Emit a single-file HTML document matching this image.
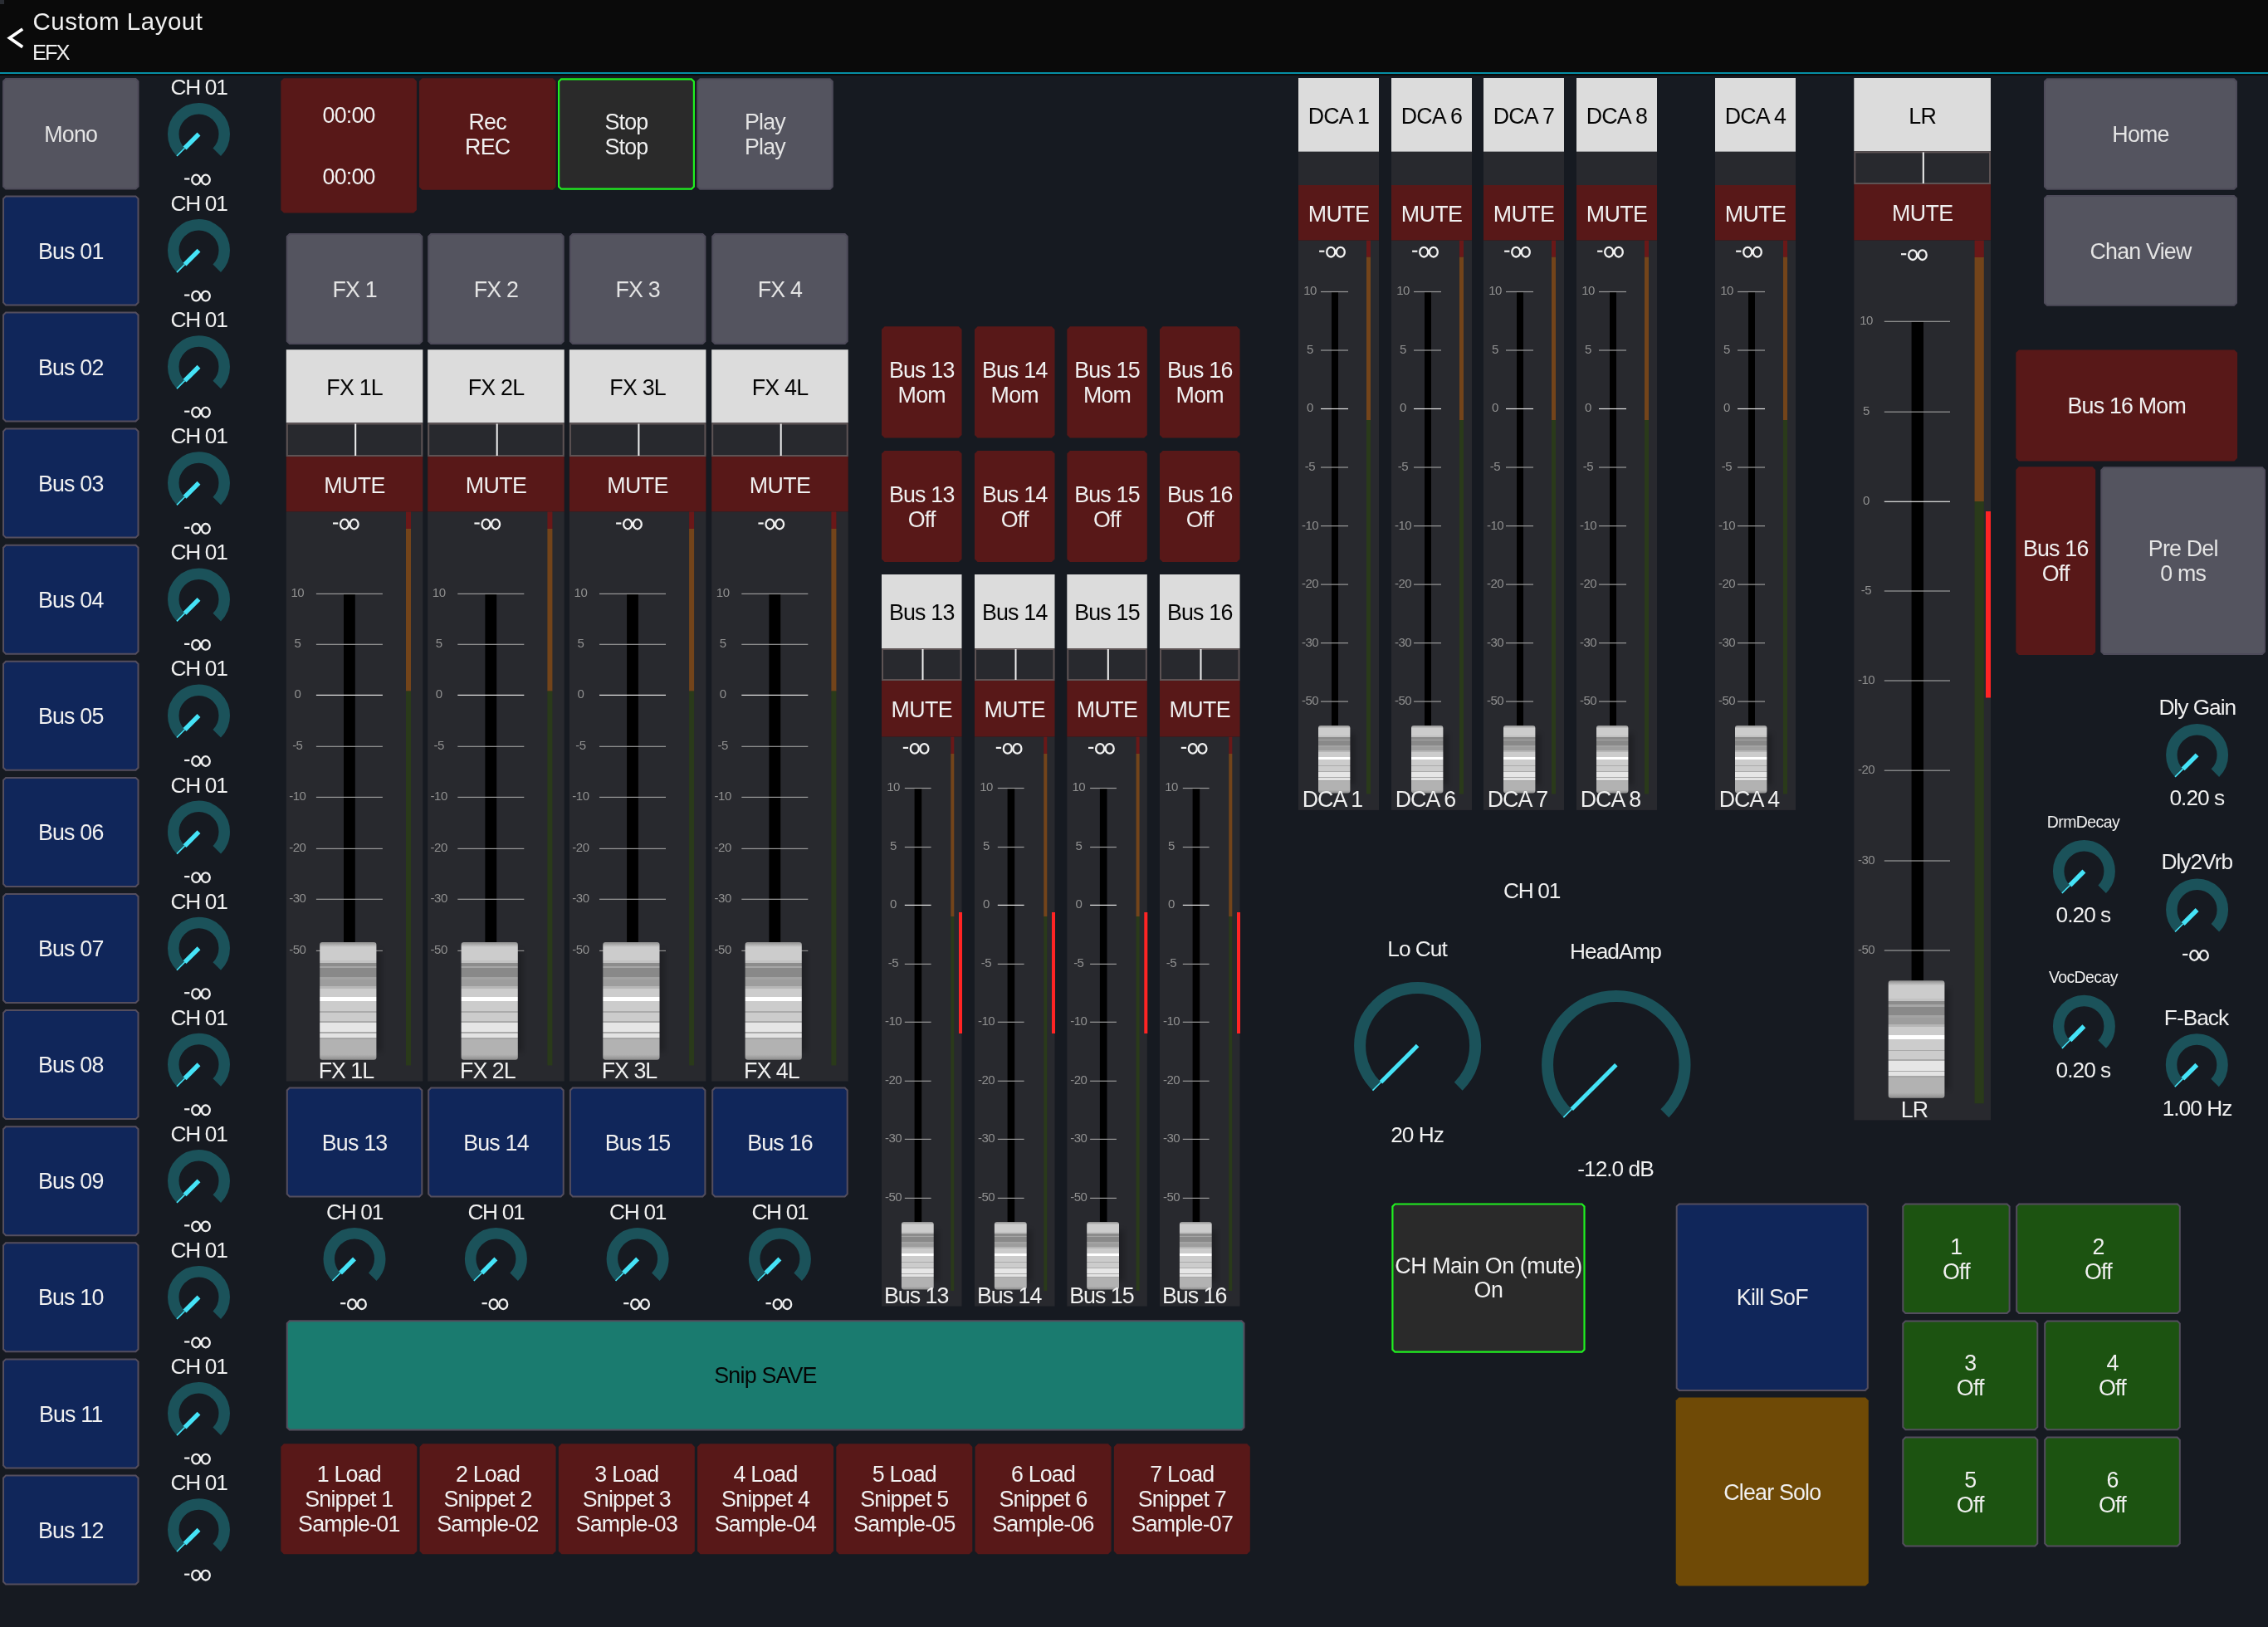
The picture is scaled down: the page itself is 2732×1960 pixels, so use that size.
<!DOCTYPE html><html><head><meta charset="utf-8"><title>Custom Layout</title><style>html,body{margin:0;padding:0;background:#161a21;overflow:hidden;width:2732px;height:1960px}svg text{font-family:"Liberation Sans",sans-serif} svg{will-change:transform}</style></head><body><svg width="2732" height="1960" viewBox="0 0 2732 1960" font-family='"Liberation Sans", sans-serif' style="display:block"><defs><filter id="blur" x="-50%" y="-20%" width="200%" height="140%"><feGaussianBlur stdDeviation="3"/></filter><linearGradient id="fcap" x1="0" y1="0" x2="0" y2="1"><stop offset="0.0" stop-color="#8e8e8e"/><stop offset="0.0173" stop-color="#a8a8a8"/><stop offset="0.0415" stop-color="#cccccc"/><stop offset="0.152" stop-color="#cccccc"/><stop offset="0.152" stop-color="#c2c2c2"/><stop offset="0.173" stop-color="#c2c2c2"/><stop offset="0.173" stop-color="#8c8c8c"/><stop offset="0.204" stop-color="#8c8c8c"/><stop offset="0.204" stop-color="#a6a6a6"/><stop offset="0.221" stop-color="#a6a6a6"/><stop offset="0.221" stop-color="#898989"/><stop offset="0.298" stop-color="#898989"/><stop offset="0.298" stop-color="#a3a3a3"/><stop offset="0.318" stop-color="#a3a3a3"/><stop offset="0.318" stop-color="#9d9d9d"/><stop offset="0.374" stop-color="#9d9d9d"/><stop offset="0.374" stop-color="#b6b6b6"/><stop offset="0.394" stop-color="#b6b6b6"/><stop offset="0.394" stop-color="#cccccc"/><stop offset="0.464" stop-color="#cccccc"/><stop offset="0.464" stop-color="#ffffff"/><stop offset="0.502" stop-color="#ffffff"/><stop offset="0.502" stop-color="#cccccc"/><stop offset="0.588" stop-color="#cccccc"/><stop offset="0.588" stop-color="#ababab"/><stop offset="0.602" stop-color="#ababab"/><stop offset="0.602" stop-color="#cccccc"/><stop offset="0.671" stop-color="#cccccc"/><stop offset="0.671" stop-color="#ababab"/><stop offset="0.682" stop-color="#ababab"/><stop offset="0.682" stop-color="#e6e6e6"/><stop offset="0.765" stop-color="#e6e6e6"/><stop offset="0.765" stop-color="#ababab"/><stop offset="0.776" stop-color="#ababab"/><stop offset="0.776" stop-color="#e3e3e3"/><stop offset="0.81" stop-color="#e3e3e3"/><stop offset="0.81" stop-color="#a6a6a6"/><stop offset="0.824" stop-color="#a6a6a6"/><stop offset="0.824" stop-color="#b2b2b2"/><stop offset="0.955" stop-color="#b2b2b2"/><stop offset="1.0" stop-color="#8e8e8e"/></linearGradient></defs><rect x="0.0" y="0.0" width="2732.0" height="1960.0" fill="#161a21"/>
<rect x="0.0" y="0.0" width="2732.0" height="87.0" fill="#0a0a0a"/>
<rect x="0.0" y="87.0" width="2732.0" height="2.0" fill="#068ea5"/>
<rect x="0.0" y="89.0" width="2732.0" height="2.0" fill="#0a0a0a"/>
<rect x="0.0" y="0.0" width="5.0" height="5.0" fill="#2a2d33"/>
<polyline points="27.2,35 11.6,45.8 27.2,56.6" fill="none" stroke="#ffffff" stroke-width="3.8"/>
<text x="39.5" y="36.3" font-size="29.5" fill="#f0f0f0" text-anchor="start" letter-spacing="0.5">Custom Layout</text>
<text x="39.0" y="71.8" font-size="25.5" fill="#f0f0f0" text-anchor="start" letter-spacing="-2.0">EFX</text>
<path d="M7.00,95.00 H163.50 L166.50,98.00 V224.60 L163.50,227.60 H7.00 L4.00,224.60 V98.00 Z" fill="#54545f" stroke="#4e4b5a" stroke-width="2"/>
<text x="85.2" y="170.9" font-size="26.8" fill="#e4e4e4" text-anchor="middle" letter-spacing="-0.8">Mono</text>
<path d="M7.00,236.40 H163.50 L166.50,239.40 V364.40 L163.50,367.40 H7.00 L4.00,364.40 V239.40 Z" fill="#10265a" stroke="#544e5e" stroke-width="2"/>
<text x="85.2" y="311.5" font-size="26.8" fill="#f0f0f0" text-anchor="middle" letter-spacing="-0.8">Bus 01</text>
<path d="M7.00,376.50 H163.50 L166.50,379.50 V504.50 L163.50,507.50 H7.00 L4.00,504.50 V379.50 Z" fill="#10265a" stroke="#544e5e" stroke-width="2"/>
<text x="85.2" y="451.6" font-size="26.8" fill="#f0f0f0" text-anchor="middle" letter-spacing="-0.8">Bus 02</text>
<path d="M7.00,516.60 H163.50 L166.50,519.60 V644.60 L163.50,647.60 H7.00 L4.00,644.60 V519.60 Z" fill="#10265a" stroke="#544e5e" stroke-width="2"/>
<text x="85.2" y="591.7" font-size="26.8" fill="#f0f0f0" text-anchor="middle" letter-spacing="-0.8">Bus 03</text>
<path d="M7.00,656.70 H163.50 L166.50,659.70 V784.70 L163.50,787.70 H7.00 L4.00,784.70 V659.70 Z" fill="#10265a" stroke="#544e5e" stroke-width="2"/>
<text x="85.2" y="731.8" font-size="26.8" fill="#f0f0f0" text-anchor="middle" letter-spacing="-0.8">Bus 04</text>
<path d="M7.00,796.80 H163.50 L166.50,799.80 V924.80 L163.50,927.80 H7.00 L4.00,924.80 V799.80 Z" fill="#10265a" stroke="#544e5e" stroke-width="2"/>
<text x="85.2" y="871.9" font-size="26.8" fill="#f0f0f0" text-anchor="middle" letter-spacing="-0.8">Bus 05</text>
<path d="M7.00,936.90 H163.50 L166.50,939.90 V1064.90 L163.50,1067.90 H7.00 L4.00,1064.90 V939.90 Z" fill="#10265a" stroke="#544e5e" stroke-width="2"/>
<text x="85.2" y="1012.0" font-size="26.8" fill="#f0f0f0" text-anchor="middle" letter-spacing="-0.8">Bus 06</text>
<path d="M7.00,1077.00 H163.50 L166.50,1080.00 V1205.00 L163.50,1208.00 H7.00 L4.00,1205.00 V1080.00 Z" fill="#10265a" stroke="#544e5e" stroke-width="2"/>
<text x="85.2" y="1152.1" font-size="26.8" fill="#f0f0f0" text-anchor="middle" letter-spacing="-0.8">Bus 07</text>
<path d="M7.00,1217.10 H163.50 L166.50,1220.10 V1345.10 L163.50,1348.10 H7.00 L4.00,1345.10 V1220.10 Z" fill="#10265a" stroke="#544e5e" stroke-width="2"/>
<text x="85.2" y="1292.2" font-size="26.8" fill="#f0f0f0" text-anchor="middle" letter-spacing="-0.8">Bus 08</text>
<path d="M7.00,1357.20 H163.50 L166.50,1360.20 V1485.20 L163.50,1488.20 H7.00 L4.00,1485.20 V1360.20 Z" fill="#10265a" stroke="#544e5e" stroke-width="2"/>
<text x="85.2" y="1432.3" font-size="26.8" fill="#f0f0f0" text-anchor="middle" letter-spacing="-0.8">Bus 09</text>
<path d="M7.00,1497.30 H163.50 L166.50,1500.30 V1625.30 L163.50,1628.30 H7.00 L4.00,1625.30 V1500.30 Z" fill="#10265a" stroke="#544e5e" stroke-width="2"/>
<text x="85.2" y="1572.4" font-size="26.8" fill="#f0f0f0" text-anchor="middle" letter-spacing="-0.8">Bus 10</text>
<path d="M7.00,1637.40 H163.50 L166.50,1640.40 V1765.40 L163.50,1768.40 H7.00 L4.00,1765.40 V1640.40 Z" fill="#10265a" stroke="#544e5e" stroke-width="2"/>
<text x="85.2" y="1712.5" font-size="26.8" fill="#f0f0f0" text-anchor="middle" letter-spacing="-0.8">Bus 11</text>
<path d="M7.00,1777.50 H163.50 L166.50,1780.50 V1905.50 L163.50,1908.50 H7.00 L4.00,1905.50 V1780.50 Z" fill="#10265a" stroke="#544e5e" stroke-width="2"/>
<text x="85.2" y="1852.6" font-size="26.8" fill="#f0f0f0" text-anchor="middle" letter-spacing="-0.8">Bus 12</text>
<text x="239.5" y="113.9" font-size="26.3" fill="#f0f0f0" text-anchor="middle" letter-spacing="-1.3">CH 01</text>
<path d="M217.76,183.24 A30.75,30.75 0 1 1 261.24,183.24" fill="none" stroke="#1b525a" stroke-width="13.5"/>
<line x1="239.50" y1="161.50" x2="222.53" y2="178.47" stroke="#45e3f7" stroke-width="5.5"/>
<line x1="222.53" y1="178.47" x2="212.98" y2="188.02" stroke="#45e3f7" stroke-width="1.6"/>
<rect x="222.1" y="214.4" width="6.3" height="2.2" fill="#f0f0f0"/>
<ellipse cx="236.2" cy="216.5" rx="5.0" ry="5.8" fill="none" stroke="#f0f0f0" stroke-width="2.3"/>
<ellipse cx="247.8" cy="216.5" rx="5.0" ry="5.8" fill="none" stroke="#f0f0f0" stroke-width="2.3"/>
<text x="239.5" y="254.0" font-size="26.3" fill="#f0f0f0" text-anchor="middle" letter-spacing="-1.3">CH 01</text>
<path d="M217.76,323.34 A30.75,30.75 0 1 1 261.24,323.34" fill="none" stroke="#1b525a" stroke-width="13.5"/>
<line x1="239.50" y1="301.60" x2="222.53" y2="318.57" stroke="#45e3f7" stroke-width="5.5"/>
<line x1="222.53" y1="318.57" x2="212.98" y2="328.12" stroke="#45e3f7" stroke-width="1.6"/>
<rect x="222.1" y="354.5" width="6.3" height="2.2" fill="#f0f0f0"/>
<ellipse cx="236.2" cy="356.6" rx="5.0" ry="5.8" fill="none" stroke="#f0f0f0" stroke-width="2.3"/>
<ellipse cx="247.8" cy="356.6" rx="5.0" ry="5.8" fill="none" stroke="#f0f0f0" stroke-width="2.3"/>
<text x="239.5" y="394.1" font-size="26.3" fill="#f0f0f0" text-anchor="middle" letter-spacing="-1.3">CH 01</text>
<path d="M217.76,463.44 A30.75,30.75 0 1 1 261.24,463.44" fill="none" stroke="#1b525a" stroke-width="13.5"/>
<line x1="239.50" y1="441.70" x2="222.53" y2="458.67" stroke="#45e3f7" stroke-width="5.5"/>
<line x1="222.53" y1="458.67" x2="212.98" y2="468.22" stroke="#45e3f7" stroke-width="1.6"/>
<rect x="222.1" y="494.6" width="6.3" height="2.2" fill="#f0f0f0"/>
<ellipse cx="236.2" cy="496.7" rx="5.0" ry="5.8" fill="none" stroke="#f0f0f0" stroke-width="2.3"/>
<ellipse cx="247.8" cy="496.7" rx="5.0" ry="5.8" fill="none" stroke="#f0f0f0" stroke-width="2.3"/>
<text x="239.5" y="534.2" font-size="26.3" fill="#f0f0f0" text-anchor="middle" letter-spacing="-1.3">CH 01</text>
<path d="M217.76,603.54 A30.75,30.75 0 1 1 261.24,603.54" fill="none" stroke="#1b525a" stroke-width="13.5"/>
<line x1="239.50" y1="581.80" x2="222.53" y2="598.77" stroke="#45e3f7" stroke-width="5.5"/>
<line x1="222.53" y1="598.77" x2="212.98" y2="608.32" stroke="#45e3f7" stroke-width="1.6"/>
<rect x="222.1" y="634.7" width="6.3" height="2.2" fill="#f0f0f0"/>
<ellipse cx="236.2" cy="636.8" rx="5.0" ry="5.8" fill="none" stroke="#f0f0f0" stroke-width="2.3"/>
<ellipse cx="247.8" cy="636.8" rx="5.0" ry="5.8" fill="none" stroke="#f0f0f0" stroke-width="2.3"/>
<text x="239.5" y="674.3" font-size="26.3" fill="#f0f0f0" text-anchor="middle" letter-spacing="-1.3">CH 01</text>
<path d="M217.76,743.64 A30.75,30.75 0 1 1 261.24,743.64" fill="none" stroke="#1b525a" stroke-width="13.5"/>
<line x1="239.50" y1="721.90" x2="222.53" y2="738.87" stroke="#45e3f7" stroke-width="5.5"/>
<line x1="222.53" y1="738.87" x2="212.98" y2="748.42" stroke="#45e3f7" stroke-width="1.6"/>
<rect x="222.1" y="774.8" width="6.3" height="2.2" fill="#f0f0f0"/>
<ellipse cx="236.2" cy="776.9" rx="5.0" ry="5.8" fill="none" stroke="#f0f0f0" stroke-width="2.3"/>
<ellipse cx="247.8" cy="776.9" rx="5.0" ry="5.8" fill="none" stroke="#f0f0f0" stroke-width="2.3"/>
<text x="239.5" y="814.4" font-size="26.3" fill="#f0f0f0" text-anchor="middle" letter-spacing="-1.3">CH 01</text>
<path d="M217.76,883.74 A30.75,30.75 0 1 1 261.24,883.74" fill="none" stroke="#1b525a" stroke-width="13.5"/>
<line x1="239.50" y1="862.00" x2="222.53" y2="878.97" stroke="#45e3f7" stroke-width="5.5"/>
<line x1="222.53" y1="878.97" x2="212.98" y2="888.52" stroke="#45e3f7" stroke-width="1.6"/>
<rect x="222.1" y="914.9" width="6.3" height="2.2" fill="#f0f0f0"/>
<ellipse cx="236.2" cy="917.0" rx="5.0" ry="5.8" fill="none" stroke="#f0f0f0" stroke-width="2.3"/>
<ellipse cx="247.8" cy="917.0" rx="5.0" ry="5.8" fill="none" stroke="#f0f0f0" stroke-width="2.3"/>
<text x="239.5" y="954.5" font-size="26.3" fill="#f0f0f0" text-anchor="middle" letter-spacing="-1.3">CH 01</text>
<path d="M217.76,1023.84 A30.75,30.75 0 1 1 261.24,1023.84" fill="none" stroke="#1b525a" stroke-width="13.5"/>
<line x1="239.50" y1="1002.10" x2="222.53" y2="1019.07" stroke="#45e3f7" stroke-width="5.5"/>
<line x1="222.53" y1="1019.07" x2="212.98" y2="1028.62" stroke="#45e3f7" stroke-width="1.6"/>
<rect x="222.1" y="1055.0" width="6.3" height="2.2" fill="#f0f0f0"/>
<ellipse cx="236.2" cy="1057.1" rx="5.0" ry="5.8" fill="none" stroke="#f0f0f0" stroke-width="2.3"/>
<ellipse cx="247.8" cy="1057.1" rx="5.0" ry="5.8" fill="none" stroke="#f0f0f0" stroke-width="2.3"/>
<text x="239.5" y="1094.6" font-size="26.3" fill="#f0f0f0" text-anchor="middle" letter-spacing="-1.3">CH 01</text>
<path d="M217.76,1163.94 A30.75,30.75 0 1 1 261.24,1163.94" fill="none" stroke="#1b525a" stroke-width="13.5"/>
<line x1="239.50" y1="1142.20" x2="222.53" y2="1159.17" stroke="#45e3f7" stroke-width="5.5"/>
<line x1="222.53" y1="1159.17" x2="212.98" y2="1168.72" stroke="#45e3f7" stroke-width="1.6"/>
<rect x="222.1" y="1195.1" width="6.3" height="2.2" fill="#f0f0f0"/>
<ellipse cx="236.2" cy="1197.2" rx="5.0" ry="5.8" fill="none" stroke="#f0f0f0" stroke-width="2.3"/>
<ellipse cx="247.8" cy="1197.2" rx="5.0" ry="5.8" fill="none" stroke="#f0f0f0" stroke-width="2.3"/>
<text x="239.5" y="1234.7" font-size="26.3" fill="#f0f0f0" text-anchor="middle" letter-spacing="-1.3">CH 01</text>
<path d="M217.76,1304.04 A30.75,30.75 0 1 1 261.24,1304.04" fill="none" stroke="#1b525a" stroke-width="13.5"/>
<line x1="239.50" y1="1282.30" x2="222.53" y2="1299.27" stroke="#45e3f7" stroke-width="5.5"/>
<line x1="222.53" y1="1299.27" x2="212.98" y2="1308.82" stroke="#45e3f7" stroke-width="1.6"/>
<rect x="222.1" y="1335.2" width="6.3" height="2.2" fill="#f0f0f0"/>
<ellipse cx="236.2" cy="1337.3" rx="5.0" ry="5.8" fill="none" stroke="#f0f0f0" stroke-width="2.3"/>
<ellipse cx="247.8" cy="1337.3" rx="5.0" ry="5.8" fill="none" stroke="#f0f0f0" stroke-width="2.3"/>
<text x="239.5" y="1374.8" font-size="26.3" fill="#f0f0f0" text-anchor="middle" letter-spacing="-1.3">CH 01</text>
<path d="M217.76,1444.14 A30.75,30.75 0 1 1 261.24,1444.14" fill="none" stroke="#1b525a" stroke-width="13.5"/>
<line x1="239.50" y1="1422.40" x2="222.53" y2="1439.37" stroke="#45e3f7" stroke-width="5.5"/>
<line x1="222.53" y1="1439.37" x2="212.98" y2="1448.92" stroke="#45e3f7" stroke-width="1.6"/>
<rect x="222.1" y="1475.3" width="6.3" height="2.2" fill="#f0f0f0"/>
<ellipse cx="236.2" cy="1477.4" rx="5.0" ry="5.8" fill="none" stroke="#f0f0f0" stroke-width="2.3"/>
<ellipse cx="247.8" cy="1477.4" rx="5.0" ry="5.8" fill="none" stroke="#f0f0f0" stroke-width="2.3"/>
<text x="239.5" y="1514.9" font-size="26.3" fill="#f0f0f0" text-anchor="middle" letter-spacing="-1.3">CH 01</text>
<path d="M217.76,1584.24 A30.75,30.75 0 1 1 261.24,1584.24" fill="none" stroke="#1b525a" stroke-width="13.5"/>
<line x1="239.50" y1="1562.50" x2="222.53" y2="1579.47" stroke="#45e3f7" stroke-width="5.5"/>
<line x1="222.53" y1="1579.47" x2="212.98" y2="1589.02" stroke="#45e3f7" stroke-width="1.6"/>
<rect x="222.1" y="1615.4" width="6.3" height="2.2" fill="#f0f0f0"/>
<ellipse cx="236.2" cy="1617.5" rx="5.0" ry="5.8" fill="none" stroke="#f0f0f0" stroke-width="2.3"/>
<ellipse cx="247.8" cy="1617.5" rx="5.0" ry="5.8" fill="none" stroke="#f0f0f0" stroke-width="2.3"/>
<text x="239.5" y="1655.0" font-size="26.3" fill="#f0f0f0" text-anchor="middle" letter-spacing="-1.3">CH 01</text>
<path d="M217.76,1724.34 A30.75,30.75 0 1 1 261.24,1724.34" fill="none" stroke="#1b525a" stroke-width="13.5"/>
<line x1="239.50" y1="1702.60" x2="222.53" y2="1719.57" stroke="#45e3f7" stroke-width="5.5"/>
<line x1="222.53" y1="1719.57" x2="212.98" y2="1729.12" stroke="#45e3f7" stroke-width="1.6"/>
<rect x="222.1" y="1755.5" width="6.3" height="2.2" fill="#f0f0f0"/>
<ellipse cx="236.2" cy="1757.6" rx="5.0" ry="5.8" fill="none" stroke="#f0f0f0" stroke-width="2.3"/>
<ellipse cx="247.8" cy="1757.6" rx="5.0" ry="5.8" fill="none" stroke="#f0f0f0" stroke-width="2.3"/>
<text x="239.5" y="1795.1" font-size="26.3" fill="#f0f0f0" text-anchor="middle" letter-spacing="-1.3">CH 01</text>
<path d="M217.76,1864.44 A30.75,30.75 0 1 1 261.24,1864.44" fill="none" stroke="#1b525a" stroke-width="13.5"/>
<line x1="239.50" y1="1842.70" x2="222.53" y2="1859.67" stroke="#45e3f7" stroke-width="5.5"/>
<line x1="222.53" y1="1859.67" x2="212.98" y2="1869.22" stroke="#45e3f7" stroke-width="1.6"/>
<rect x="222.1" y="1895.6" width="6.3" height="2.2" fill="#f0f0f0"/>
<ellipse cx="236.2" cy="1897.7" rx="5.0" ry="5.8" fill="none" stroke="#f0f0f0" stroke-width="2.3"/>
<ellipse cx="247.8" cy="1897.7" rx="5.0" ry="5.8" fill="none" stroke="#f0f0f0" stroke-width="2.3"/>
<path d="M341.90,94.20 H498.30 L501.90,97.80 V252.90 L498.30,256.50 H341.90 L338.30,252.90 V97.80 Z" fill="#581818"/>
<text x="420.1" y="147.9" font-size="26.8" fill="#f0f0f0" text-anchor="middle" letter-spacing="-0.8">00:00</text>
<text x="420.1" y="222.0" font-size="26.8" fill="#f0f0f0" text-anchor="middle" letter-spacing="-0.8">00:00</text>
<path d="M508.60,94.20 H665.90 L669.50,97.80 V225.20 L665.90,228.80 H508.60 L505.00,225.20 V97.80 Z" fill="#581818"/>
<text x="587.2" y="156.1" font-size="26.8" fill="#f0f0f0" text-anchor="middle" letter-spacing="-0.8">Rec</text>
<text x="587.2" y="186.1" font-size="26.8" fill="#f0f0f0" text-anchor="middle" letter-spacing="-0.8">REC</text>
<path d="M676.04,95.30 H832.96 L835.90,98.24 V224.76 L832.96,227.70 H676.04 L673.10,224.76 V98.24 Z" fill="#2a2a2a" stroke="#20f020" stroke-width="2.2"/>
<text x="754.5" y="156.1" font-size="26.8" fill="#f0f0f0" text-anchor="middle" letter-spacing="-0.8">Stop</text>
<text x="754.5" y="186.1" font-size="26.8" fill="#f0f0f0" text-anchor="middle" letter-spacing="-0.8">Stop</text>
<path d="M843.30,95.20 H999.80 L1002.80,98.20 V224.80 L999.80,227.80 H843.30 L840.30,224.80 V98.20 Z" fill="#54545f" stroke="#4e4b5a" stroke-width="2"/>
<text x="921.5" y="156.1" font-size="26.8" fill="#e4e4e4" text-anchor="middle" letter-spacing="-0.8">Play</text>
<text x="921.5" y="186.1" font-size="26.8" fill="#e4e4e4" text-anchor="middle" letter-spacing="-0.8">Play</text>
<path d="M348.80,282.00 H505.30 L508.30,285.00 V411.00 L505.30,414.00 H348.80 L345.80,411.00 V285.00 Z" fill="#54545f" stroke="#4e4b5a" stroke-width="2"/>
<text x="427.1" y="357.6" font-size="26.8" fill="#e4e4e4" text-anchor="middle" letter-spacing="-0.8">FX 1</text>
<rect x="344.8" y="421.2" width="164.5" height="88.3" fill="#dcdcdc"/>
<text x="427.1" y="475.9" font-size="26.8" fill="#050505" text-anchor="middle" letter-spacing="-0.8">FX 1L</text>
<rect x="344.8" y="509.5" width="164.5" height="40.5" fill="#28292e"/>
<rect x="345.8" y="510.5" width="162.5" height="38.5" fill="none" stroke="#5d5354" stroke-width="2"/>
<rect x="427.2" y="510.5" width="2" height="38.5" fill="#f0f0f0"/>
<rect x="344.8" y="550.0" width="164.5" height="66.5" fill="#581818"/>
<text x="427.1" y="593.8" font-size="26.8" fill="#f0f0f0" text-anchor="middle" letter-spacing="-0.6">MUTE</text>
<rect x="344.8" y="616.5" width="164.5" height="686.1" fill="#28292e"/>
<rect x="401.0" y="629.4" width="6.3" height="2.2" fill="#f0f0f0"/>
<ellipse cx="415.0" cy="631.5" rx="5.0" ry="5.8" fill="none" stroke="#f0f0f0" stroke-width="2.3"/>
<ellipse cx="426.6" cy="631.5" rx="5.0" ry="5.8" fill="none" stroke="#f0f0f0" stroke-width="2.3"/>
<rect x="489.0" y="616.5" width="6.0" height="20.5" fill="#6a1818"/>
<rect x="489.0" y="637.0" width="6.0" height="195.6" fill="#73441a"/>
<rect x="489.0" y="832.6" width="6.0" height="450.9" fill="#2a3a1a"/>
<rect x="414.0" y="715.4" width="13.8" height="419.6" fill="#000000"/>
<rect x="380.9" y="714.8" width="80.0" height="1.2" fill="#9a9a9a"/>
<text x="358.3" y="719.3" font-size="15" fill="#909090" text-anchor="middle" letter-spacing="-0.5">10</text>
<rect x="380.9" y="775.7" width="80.0" height="1.2" fill="#9a9a9a"/>
<text x="358.3" y="780.2" font-size="15" fill="#909090" text-anchor="middle" letter-spacing="-0.5">5</text>
<rect x="380.9" y="836.8" width="80.0" height="1.2" fill="#e6e6e6"/>
<text x="358.3" y="841.3" font-size="15" fill="#909090" text-anchor="middle" letter-spacing="-0.5">0</text>
<rect x="380.9" y="898.7" width="80.0" height="1.2" fill="#9a9a9a"/>
<text x="358.3" y="903.2" font-size="15" fill="#909090" text-anchor="middle" letter-spacing="-0.5">-5</text>
<rect x="380.9" y="959.8" width="80.0" height="1.2" fill="#9a9a9a"/>
<text x="358.3" y="964.3" font-size="15" fill="#909090" text-anchor="middle" letter-spacing="-0.5">-10</text>
<rect x="380.9" y="1021.8" width="80.0" height="1.2" fill="#9a9a9a"/>
<text x="358.3" y="1026.3" font-size="15" fill="#909090" text-anchor="middle" letter-spacing="-0.5">-20</text>
<rect x="380.9" y="1082.7" width="80.0" height="1.2" fill="#9a9a9a"/>
<text x="358.3" y="1087.2" font-size="15" fill="#909090" text-anchor="middle" letter-spacing="-0.5">-30</text>
<rect x="380.9" y="1144.8" width="80.0" height="1.2" fill="#9a9a9a"/>
<text x="358.3" y="1149.3" font-size="15" fill="#909090" text-anchor="middle" letter-spacing="-0.5">-50</text>
<rect x="449.4" y="1145.0" width="10" height="121.8" fill="#000" opacity="0.22" filter="url(#blur)"/>
<rect x="385.2" y="1135.0" width="68.2" height="141.8" fill="url(#fcap)" rx="3"/>
<text x="416.9" y="1298.7" font-size="26.8" fill="#f0f0f0" text-anchor="middle" letter-spacing="-1.0">FX 1L</text>
<path d="M348.80,1310.50 H505.30 L508.30,1313.50 V1438.40 L505.30,1441.40 H348.80 L345.80,1438.40 V1313.50 Z" fill="#10265a" stroke="#544e5e" stroke-width="2"/>
<text x="427.1" y="1385.5" font-size="26.8" fill="#f0f0f0" text-anchor="middle" letter-spacing="-0.8">Bus 13</text>
<text x="427.0" y="1468.6" font-size="26.3" fill="#f0f0f0" text-anchor="middle" letter-spacing="-1.3">CH 01</text>
<path d="M405.26,1538.24 A30.75,30.75 0 1 1 448.74,1538.24" fill="none" stroke="#1b525a" stroke-width="13.5"/>
<line x1="427.00" y1="1516.50" x2="410.03" y2="1533.47" stroke="#45e3f7" stroke-width="5.5"/>
<line x1="410.03" y1="1533.47" x2="400.48" y2="1543.02" stroke="#45e3f7" stroke-width="1.6"/>
<rect x="410.1" y="1569.1" width="6.3" height="2.2" fill="#f0f0f0"/>
<ellipse cx="424.1" cy="1571.2" rx="5.0" ry="5.8" fill="none" stroke="#f0f0f0" stroke-width="2.3"/>
<ellipse cx="435.8" cy="1571.2" rx="5.0" ry="5.8" fill="none" stroke="#f0f0f0" stroke-width="2.3"/>
<path d="M519.20,282.00 H675.70 L678.70,285.00 V411.00 L675.70,414.00 H519.20 L516.20,411.00 V285.00 Z" fill="#54545f" stroke="#4e4b5a" stroke-width="2"/>
<text x="597.5" y="357.6" font-size="26.8" fill="#e4e4e4" text-anchor="middle" letter-spacing="-0.8">FX 2</text>
<rect x="515.2" y="421.2" width="164.5" height="88.3" fill="#dcdcdc"/>
<text x="597.5" y="475.9" font-size="26.8" fill="#050505" text-anchor="middle" letter-spacing="-0.8">FX 2L</text>
<rect x="515.2" y="509.5" width="164.5" height="40.5" fill="#28292e"/>
<rect x="516.2" y="510.5" width="162.5" height="38.5" fill="none" stroke="#5d5354" stroke-width="2"/>
<rect x="597.7" y="510.5" width="2" height="38.5" fill="#f0f0f0"/>
<rect x="515.2" y="550.0" width="164.5" height="66.5" fill="#581818"/>
<text x="597.5" y="593.8" font-size="26.8" fill="#f0f0f0" text-anchor="middle" letter-spacing="-0.6">MUTE</text>
<rect x="515.2" y="616.5" width="164.5" height="686.1" fill="#28292e"/>
<rect x="571.4" y="629.4" width="6.3" height="2.2" fill="#f0f0f0"/>
<ellipse cx="585.5" cy="631.5" rx="5.0" ry="5.8" fill="none" stroke="#f0f0f0" stroke-width="2.3"/>
<ellipse cx="597.1" cy="631.5" rx="5.0" ry="5.8" fill="none" stroke="#f0f0f0" stroke-width="2.3"/>
<rect x="659.4" y="616.5" width="6.0" height="20.5" fill="#6a1818"/>
<rect x="659.4" y="637.0" width="6.0" height="195.6" fill="#73441a"/>
<rect x="659.4" y="832.6" width="6.0" height="450.9" fill="#2a3a1a"/>
<rect x="584.4" y="715.4" width="13.8" height="419.6" fill="#000000"/>
<rect x="551.3" y="714.8" width="80.0" height="1.2" fill="#9a9a9a"/>
<text x="528.7" y="719.3" font-size="15" fill="#909090" text-anchor="middle" letter-spacing="-0.5">10</text>
<rect x="551.3" y="775.7" width="80.0" height="1.2" fill="#9a9a9a"/>
<text x="528.7" y="780.2" font-size="15" fill="#909090" text-anchor="middle" letter-spacing="-0.5">5</text>
<rect x="551.3" y="836.8" width="80.0" height="1.2" fill="#e6e6e6"/>
<text x="528.7" y="841.3" font-size="15" fill="#909090" text-anchor="middle" letter-spacing="-0.5">0</text>
<rect x="551.3" y="898.7" width="80.0" height="1.2" fill="#9a9a9a"/>
<text x="528.7" y="903.2" font-size="15" fill="#909090" text-anchor="middle" letter-spacing="-0.5">-5</text>
<rect x="551.3" y="959.8" width="80.0" height="1.2" fill="#9a9a9a"/>
<text x="528.7" y="964.3" font-size="15" fill="#909090" text-anchor="middle" letter-spacing="-0.5">-10</text>
<rect x="551.3" y="1021.8" width="80.0" height="1.2" fill="#9a9a9a"/>
<text x="528.7" y="1026.3" font-size="15" fill="#909090" text-anchor="middle" letter-spacing="-0.5">-20</text>
<rect x="551.3" y="1082.7" width="80.0" height="1.2" fill="#9a9a9a"/>
<text x="528.7" y="1087.2" font-size="15" fill="#909090" text-anchor="middle" letter-spacing="-0.5">-30</text>
<rect x="551.3" y="1144.8" width="80.0" height="1.2" fill="#9a9a9a"/>
<text x="528.7" y="1149.3" font-size="15" fill="#909090" text-anchor="middle" letter-spacing="-0.5">-50</text>
<rect x="619.8" y="1145.0" width="10" height="121.8" fill="#000" opacity="0.22" filter="url(#blur)"/>
<rect x="555.6" y="1135.0" width="68.2" height="141.8" fill="url(#fcap)" rx="3"/>
<text x="587.3" y="1298.7" font-size="26.8" fill="#f0f0f0" text-anchor="middle" letter-spacing="-1.0">FX 2L</text>
<path d="M519.20,1310.50 H675.70 L678.70,1313.50 V1438.40 L675.70,1441.40 H519.20 L516.20,1438.40 V1313.50 Z" fill="#10265a" stroke="#544e5e" stroke-width="2"/>
<text x="597.5" y="1385.5" font-size="26.8" fill="#f0f0f0" text-anchor="middle" letter-spacing="-0.8">Bus 14</text>
<text x="597.4" y="1468.6" font-size="26.3" fill="#f0f0f0" text-anchor="middle" letter-spacing="-1.3">CH 01</text>
<path d="M575.66,1538.24 A30.75,30.75 0 1 1 619.14,1538.24" fill="none" stroke="#1b525a" stroke-width="13.5"/>
<line x1="597.40" y1="1516.50" x2="580.43" y2="1533.47" stroke="#45e3f7" stroke-width="5.5"/>
<line x1="580.43" y1="1533.47" x2="570.88" y2="1543.02" stroke="#45e3f7" stroke-width="1.6"/>
<rect x="580.5" y="1569.1" width="6.3" height="2.2" fill="#f0f0f0"/>
<ellipse cx="594.6" cy="1571.2" rx="5.0" ry="5.8" fill="none" stroke="#f0f0f0" stroke-width="2.3"/>
<ellipse cx="606.2" cy="1571.2" rx="5.0" ry="5.8" fill="none" stroke="#f0f0f0" stroke-width="2.3"/>
<path d="M689.90,282.00 H846.40 L849.40,285.00 V411.00 L846.40,414.00 H689.90 L686.90,411.00 V285.00 Z" fill="#54545f" stroke="#4e4b5a" stroke-width="2"/>
<text x="768.1" y="357.6" font-size="26.8" fill="#e4e4e4" text-anchor="middle" letter-spacing="-0.8">FX 3</text>
<rect x="685.9" y="421.2" width="164.5" height="88.3" fill="#dcdcdc"/>
<text x="768.1" y="475.9" font-size="26.8" fill="#050505" text-anchor="middle" letter-spacing="-0.8">FX 3L</text>
<rect x="685.9" y="509.5" width="164.5" height="40.5" fill="#28292e"/>
<rect x="686.9" y="510.5" width="162.5" height="38.5" fill="none" stroke="#5d5354" stroke-width="2"/>
<rect x="768.4" y="510.5" width="2" height="38.5" fill="#f0f0f0"/>
<rect x="685.9" y="550.0" width="164.5" height="66.5" fill="#581818"/>
<text x="768.1" y="593.8" font-size="26.8" fill="#f0f0f0" text-anchor="middle" letter-spacing="-0.6">MUTE</text>
<rect x="685.9" y="616.5" width="164.5" height="686.1" fill="#28292e"/>
<rect x="742.1" y="629.4" width="6.3" height="2.2" fill="#f0f0f0"/>
<ellipse cx="756.1" cy="631.5" rx="5.0" ry="5.8" fill="none" stroke="#f0f0f0" stroke-width="2.3"/>
<ellipse cx="767.8" cy="631.5" rx="5.0" ry="5.8" fill="none" stroke="#f0f0f0" stroke-width="2.3"/>
<rect x="830.1" y="616.5" width="6.0" height="20.5" fill="#6a1818"/>
<rect x="830.1" y="637.0" width="6.0" height="195.6" fill="#73441a"/>
<rect x="830.1" y="832.6" width="6.0" height="450.9" fill="#2a3a1a"/>
<rect x="755.1" y="715.4" width="13.8" height="419.6" fill="#000000"/>
<rect x="722.0" y="714.8" width="80.0" height="1.2" fill="#9a9a9a"/>
<text x="699.4" y="719.3" font-size="15" fill="#909090" text-anchor="middle" letter-spacing="-0.5">10</text>
<rect x="722.0" y="775.7" width="80.0" height="1.2" fill="#9a9a9a"/>
<text x="699.4" y="780.2" font-size="15" fill="#909090" text-anchor="middle" letter-spacing="-0.5">5</text>
<rect x="722.0" y="836.8" width="80.0" height="1.2" fill="#e6e6e6"/>
<text x="699.4" y="841.3" font-size="15" fill="#909090" text-anchor="middle" letter-spacing="-0.5">0</text>
<rect x="722.0" y="898.7" width="80.0" height="1.2" fill="#9a9a9a"/>
<text x="699.4" y="903.2" font-size="15" fill="#909090" text-anchor="middle" letter-spacing="-0.5">-5</text>
<rect x="722.0" y="959.8" width="80.0" height="1.2" fill="#9a9a9a"/>
<text x="699.4" y="964.3" font-size="15" fill="#909090" text-anchor="middle" letter-spacing="-0.5">-10</text>
<rect x="722.0" y="1021.8" width="80.0" height="1.2" fill="#9a9a9a"/>
<text x="699.4" y="1026.3" font-size="15" fill="#909090" text-anchor="middle" letter-spacing="-0.5">-20</text>
<rect x="722.0" y="1082.7" width="80.0" height="1.2" fill="#9a9a9a"/>
<text x="699.4" y="1087.2" font-size="15" fill="#909090" text-anchor="middle" letter-spacing="-0.5">-30</text>
<rect x="722.0" y="1144.8" width="80.0" height="1.2" fill="#9a9a9a"/>
<text x="699.4" y="1149.3" font-size="15" fill="#909090" text-anchor="middle" letter-spacing="-0.5">-50</text>
<rect x="790.5" y="1145.0" width="10" height="121.8" fill="#000" opacity="0.22" filter="url(#blur)"/>
<rect x="726.3" y="1135.0" width="68.2" height="141.8" fill="url(#fcap)" rx="3"/>
<text x="758.0" y="1298.7" font-size="26.8" fill="#f0f0f0" text-anchor="middle" letter-spacing="-1.0">FX 3L</text>
<path d="M689.90,1310.50 H846.40 L849.40,1313.50 V1438.40 L846.40,1441.40 H689.90 L686.90,1438.40 V1313.50 Z" fill="#10265a" stroke="#544e5e" stroke-width="2"/>
<text x="768.1" y="1385.5" font-size="26.8" fill="#f0f0f0" text-anchor="middle" letter-spacing="-0.8">Bus 15</text>
<text x="768.1" y="1468.6" font-size="26.3" fill="#f0f0f0" text-anchor="middle" letter-spacing="-1.3">CH 01</text>
<path d="M746.36,1538.24 A30.75,30.75 0 1 1 789.84,1538.24" fill="none" stroke="#1b525a" stroke-width="13.5"/>
<line x1="768.10" y1="1516.50" x2="751.13" y2="1533.47" stroke="#45e3f7" stroke-width="5.5"/>
<line x1="751.13" y1="1533.47" x2="741.58" y2="1543.02" stroke="#45e3f7" stroke-width="1.6"/>
<rect x="751.2" y="1569.1" width="6.3" height="2.2" fill="#f0f0f0"/>
<ellipse cx="765.2" cy="1571.2" rx="5.0" ry="5.8" fill="none" stroke="#f0f0f0" stroke-width="2.3"/>
<ellipse cx="776.9" cy="1571.2" rx="5.0" ry="5.8" fill="none" stroke="#f0f0f0" stroke-width="2.3"/>
<path d="M861.20,282.00 H1017.70 L1020.70,285.00 V411.00 L1017.70,414.00 H861.20 L858.20,411.00 V285.00 Z" fill="#54545f" stroke="#4e4b5a" stroke-width="2"/>
<text x="939.5" y="357.6" font-size="26.8" fill="#e4e4e4" text-anchor="middle" letter-spacing="-0.8">FX 4</text>
<rect x="857.2" y="421.2" width="164.5" height="88.3" fill="#dcdcdc"/>
<text x="939.5" y="475.9" font-size="26.8" fill="#050505" text-anchor="middle" letter-spacing="-0.8">FX 4L</text>
<rect x="857.2" y="509.5" width="164.5" height="40.5" fill="#28292e"/>
<rect x="858.2" y="510.5" width="162.5" height="38.5" fill="none" stroke="#5d5354" stroke-width="2"/>
<rect x="939.7" y="510.5" width="2" height="38.5" fill="#f0f0f0"/>
<rect x="857.2" y="550.0" width="164.5" height="66.5" fill="#581818"/>
<text x="939.5" y="593.8" font-size="26.8" fill="#f0f0f0" text-anchor="middle" letter-spacing="-0.6">MUTE</text>
<rect x="857.2" y="616.5" width="164.5" height="686.1" fill="#28292e"/>
<rect x="913.4" y="629.4" width="6.3" height="2.2" fill="#f0f0f0"/>
<ellipse cx="927.5" cy="631.5" rx="5.0" ry="5.8" fill="none" stroke="#f0f0f0" stroke-width="2.3"/>
<ellipse cx="939.1" cy="631.5" rx="5.0" ry="5.8" fill="none" stroke="#f0f0f0" stroke-width="2.3"/>
<rect x="1001.4" y="616.5" width="6.0" height="20.5" fill="#6a1818"/>
<rect x="1001.4" y="637.0" width="6.0" height="195.6" fill="#73441a"/>
<rect x="1001.4" y="832.6" width="6.0" height="450.9" fill="#2a3a1a"/>
<rect x="926.4" y="715.4" width="13.8" height="419.6" fill="#000000"/>
<rect x="893.3" y="714.8" width="80.0" height="1.2" fill="#9a9a9a"/>
<text x="870.7" y="719.3" font-size="15" fill="#909090" text-anchor="middle" letter-spacing="-0.5">10</text>
<rect x="893.3" y="775.7" width="80.0" height="1.2" fill="#9a9a9a"/>
<text x="870.7" y="780.2" font-size="15" fill="#909090" text-anchor="middle" letter-spacing="-0.5">5</text>
<rect x="893.3" y="836.8" width="80.0" height="1.2" fill="#e6e6e6"/>
<text x="870.7" y="841.3" font-size="15" fill="#909090" text-anchor="middle" letter-spacing="-0.5">0</text>
<rect x="893.3" y="898.7" width="80.0" height="1.2" fill="#9a9a9a"/>
<text x="870.7" y="903.2" font-size="15" fill="#909090" text-anchor="middle" letter-spacing="-0.5">-5</text>
<rect x="893.3" y="959.8" width="80.0" height="1.2" fill="#9a9a9a"/>
<text x="870.7" y="964.3" font-size="15" fill="#909090" text-anchor="middle" letter-spacing="-0.5">-10</text>
<rect x="893.3" y="1021.8" width="80.0" height="1.2" fill="#9a9a9a"/>
<text x="870.7" y="1026.3" font-size="15" fill="#909090" text-anchor="middle" letter-spacing="-0.5">-20</text>
<rect x="893.3" y="1082.7" width="80.0" height="1.2" fill="#9a9a9a"/>
<text x="870.7" y="1087.2" font-size="15" fill="#909090" text-anchor="middle" letter-spacing="-0.5">-30</text>
<rect x="893.3" y="1144.8" width="80.0" height="1.2" fill="#9a9a9a"/>
<text x="870.7" y="1149.3" font-size="15" fill="#909090" text-anchor="middle" letter-spacing="-0.5">-50</text>
<rect x="961.8" y="1145.0" width="10" height="121.8" fill="#000" opacity="0.22" filter="url(#blur)"/>
<rect x="897.6" y="1135.0" width="68.2" height="141.8" fill="url(#fcap)" rx="3"/>
<text x="929.3" y="1298.7" font-size="26.8" fill="#f0f0f0" text-anchor="middle" letter-spacing="-1.0">FX 4L</text>
<path d="M861.20,1310.50 H1017.70 L1020.70,1313.50 V1438.40 L1017.70,1441.40 H861.20 L858.20,1438.40 V1313.50 Z" fill="#10265a" stroke="#544e5e" stroke-width="2"/>
<text x="939.5" y="1385.5" font-size="26.8" fill="#f0f0f0" text-anchor="middle" letter-spacing="-0.8">Bus 16</text>
<text x="939.4" y="1468.6" font-size="26.3" fill="#f0f0f0" text-anchor="middle" letter-spacing="-1.3">CH 01</text>
<path d="M917.66,1538.24 A30.75,30.75 0 1 1 961.14,1538.24" fill="none" stroke="#1b525a" stroke-width="13.5"/>
<line x1="939.40" y1="1516.50" x2="922.43" y2="1533.47" stroke="#45e3f7" stroke-width="5.5"/>
<line x1="922.43" y1="1533.47" x2="912.88" y2="1543.02" stroke="#45e3f7" stroke-width="1.6"/>
<rect x="922.5" y="1569.1" width="6.3" height="2.2" fill="#f0f0f0"/>
<ellipse cx="936.6" cy="1571.2" rx="5.0" ry="5.8" fill="none" stroke="#f0f0f0" stroke-width="2.3"/>
<ellipse cx="948.2" cy="1571.2" rx="5.0" ry="5.8" fill="none" stroke="#f0f0f0" stroke-width="2.3"/>
<path d="M348.80,1591.20 H1495.50 L1498.50,1594.20 V1719.50 L1495.50,1722.50 H348.80 L345.80,1719.50 V1594.20 Z" fill="#1a7b6f" stroke="#544e5e" stroke-width="2"/>
<text x="922.0" y="1666.4" font-size="26.8" fill="#050505" text-anchor="middle" letter-spacing="-0.8">Snip SAVE</text>
<path d="M341.90,1739.30 H498.70 L502.30,1742.90 V1868.60 L498.70,1872.20 H341.90 L338.30,1868.60 V1742.90 Z" fill="#581818"/>
<text x="420.3" y="1785.3" font-size="26.8" fill="#f0f0f0" text-anchor="middle" letter-spacing="-0.8">1 Load</text>
<text x="420.3" y="1815.3" font-size="26.8" fill="#f0f0f0" text-anchor="middle" letter-spacing="-0.8">Snippet 1</text>
<text x="420.3" y="1845.3" font-size="26.8" fill="#f0f0f0" text-anchor="middle" letter-spacing="-0.8">Sample-01</text>
<path d="M509.15,1739.30 H665.95 L669.55,1742.90 V1868.60 L665.95,1872.20 H509.15 L505.55,1868.60 V1742.90 Z" fill="#581818"/>
<text x="587.5" y="1785.3" font-size="26.8" fill="#f0f0f0" text-anchor="middle" letter-spacing="-0.8">2 Load</text>
<text x="587.5" y="1815.3" font-size="26.8" fill="#f0f0f0" text-anchor="middle" letter-spacing="-0.8">Snippet 2</text>
<text x="587.5" y="1845.3" font-size="26.8" fill="#f0f0f0" text-anchor="middle" letter-spacing="-0.8">Sample-02</text>
<path d="M676.40,1739.30 H833.20 L836.80,1742.90 V1868.60 L833.20,1872.20 H676.40 L672.80,1868.60 V1742.90 Z" fill="#581818"/>
<text x="754.8" y="1785.3" font-size="26.8" fill="#f0f0f0" text-anchor="middle" letter-spacing="-0.8">3 Load</text>
<text x="754.8" y="1815.3" font-size="26.8" fill="#f0f0f0" text-anchor="middle" letter-spacing="-0.8">Snippet 3</text>
<text x="754.8" y="1845.3" font-size="26.8" fill="#f0f0f0" text-anchor="middle" letter-spacing="-0.8">Sample-03</text>
<path d="M843.65,1739.30 H1000.45 L1004.05,1742.90 V1868.60 L1000.45,1872.20 H843.65 L840.05,1868.60 V1742.90 Z" fill="#581818"/>
<text x="922.0" y="1785.3" font-size="26.8" fill="#f0f0f0" text-anchor="middle" letter-spacing="-0.8">4 Load</text>
<text x="922.0" y="1815.3" font-size="26.8" fill="#f0f0f0" text-anchor="middle" letter-spacing="-0.8">Snippet 4</text>
<text x="922.0" y="1845.3" font-size="26.8" fill="#f0f0f0" text-anchor="middle" letter-spacing="-0.8">Sample-04</text>
<path d="M1010.90,1739.30 H1167.70 L1171.30,1742.90 V1868.60 L1167.70,1872.20 H1010.90 L1007.30,1868.60 V1742.90 Z" fill="#581818"/>
<text x="1089.3" y="1785.3" font-size="26.8" fill="#f0f0f0" text-anchor="middle" letter-spacing="-0.8">5 Load</text>
<text x="1089.3" y="1815.3" font-size="26.8" fill="#f0f0f0" text-anchor="middle" letter-spacing="-0.8">Snippet 5</text>
<text x="1089.3" y="1845.3" font-size="26.8" fill="#f0f0f0" text-anchor="middle" letter-spacing="-0.8">Sample-05</text>
<path d="M1178.15,1739.30 H1334.95 L1338.55,1742.90 V1868.60 L1334.95,1872.20 H1178.15 L1174.55,1868.60 V1742.90 Z" fill="#581818"/>
<text x="1256.5" y="1785.3" font-size="26.8" fill="#f0f0f0" text-anchor="middle" letter-spacing="-0.8">6 Load</text>
<text x="1256.5" y="1815.3" font-size="26.8" fill="#f0f0f0" text-anchor="middle" letter-spacing="-0.8">Snippet 6</text>
<text x="1256.5" y="1845.3" font-size="26.8" fill="#f0f0f0" text-anchor="middle" letter-spacing="-0.8">Sample-06</text>
<path d="M1345.40,1739.30 H1502.20 L1505.80,1742.90 V1868.60 L1502.20,1872.20 H1345.40 L1341.80,1868.60 V1742.90 Z" fill="#581818"/>
<text x="1423.8" y="1785.3" font-size="26.8" fill="#f0f0f0" text-anchor="middle" letter-spacing="-0.8">7 Load</text>
<text x="1423.8" y="1815.3" font-size="26.8" fill="#f0f0f0" text-anchor="middle" letter-spacing="-0.8">Snippet 7</text>
<text x="1423.8" y="1845.3" font-size="26.8" fill="#f0f0f0" text-anchor="middle" letter-spacing="-0.8">Sample-07</text>
<path d="M1065.60,393.30 H1154.90 L1158.50,396.90 V524.00 L1154.90,527.60 H1065.60 L1062.00,524.00 V396.90 Z" fill="#581818"/>
<text x="1110.2" y="455.0" font-size="26.8" fill="#f0f0f0" text-anchor="middle" letter-spacing="-0.8">Bus 13</text>
<text x="1110.2" y="485.0" font-size="26.8" fill="#f0f0f0" text-anchor="middle" letter-spacing="-0.8">Mom</text>
<path d="M1065.60,543.00 H1154.90 L1158.50,546.60 V673.50 L1154.90,677.10 H1065.60 L1062.00,673.50 V546.60 Z" fill="#581818"/>
<text x="1110.2" y="604.6" font-size="26.8" fill="#f0f0f0" text-anchor="middle" letter-spacing="-0.8">Bus 13</text>
<text x="1110.2" y="634.6" font-size="26.8" fill="#f0f0f0" text-anchor="middle" letter-spacing="-0.8">Off</text>
<rect x="1062.0" y="692.0" width="96.5" height="89.0" fill="#dcdcdc"/>
<text x="1110.2" y="747.1" font-size="26.8" fill="#050505" text-anchor="middle" letter-spacing="-0.8">Bus 13</text>
<rect x="1062.0" y="781.0" width="96.5" height="39.0" fill="#28292e"/>
<rect x="1063.0" y="782.0" width="94.5" height="37.0" fill="none" stroke="#5d5354" stroke-width="2"/>
<rect x="1110.5" y="782.0" width="2" height="37.0" fill="#f0f0f0"/>
<rect x="1062.0" y="820.0" width="96.5" height="67.7" fill="#581818"/>
<text x="1110.2" y="864.4" font-size="26.8" fill="#f0f0f0" text-anchor="middle" letter-spacing="-0.6">MUTE</text>
<rect x="1062.0" y="887.7" width="96.5" height="685.9" fill="#28292e"/>
<rect x="1087.8" y="899.8" width="6.3" height="2.2" fill="#f0f0f0"/>
<ellipse cx="1101.8" cy="901.9" rx="5.0" ry="5.8" fill="none" stroke="#f0f0f0" stroke-width="2.3"/>
<ellipse cx="1113.4" cy="901.9" rx="5.0" ry="5.8" fill="none" stroke="#f0f0f0" stroke-width="2.3"/>
<rect x="1145.3" y="887.7" width="4.0" height="20.3" fill="#6a1818"/>
<rect x="1145.3" y="908.0" width="4.0" height="196.0" fill="#73441a"/>
<rect x="1145.3" y="1104.0" width="4.0" height="451.0" fill="#2a3a1a"/>
<rect x="1155.0" y="1099.0" width="4.0" height="146.0" fill="#ff2424"/>
<rect x="1101.6" y="949.5" width="8.6" height="522.5" fill="#000000"/>
<rect x="1089.8" y="948.9" width="31.8" height="1.2" fill="#9a9a9a"/>
<text x="1076.0" y="953.4" font-size="15" fill="#909090" text-anchor="middle" letter-spacing="-0.5">10</text>
<rect x="1089.8" y="1019.9" width="31.8" height="1.2" fill="#9a9a9a"/>
<text x="1076.0" y="1024.4" font-size="15" fill="#909090" text-anchor="middle" letter-spacing="-0.5">5</text>
<rect x="1089.8" y="1089.8" width="31.8" height="1.2" fill="#e6e6e6"/>
<text x="1076.0" y="1094.3" font-size="15" fill="#909090" text-anchor="middle" letter-spacing="-0.5">0</text>
<rect x="1089.8" y="1160.8" width="31.8" height="1.2" fill="#9a9a9a"/>
<text x="1076.0" y="1165.3" font-size="15" fill="#909090" text-anchor="middle" letter-spacing="-0.5">-5</text>
<rect x="1089.8" y="1230.7" width="31.8" height="1.2" fill="#9a9a9a"/>
<text x="1076.0" y="1235.2" font-size="15" fill="#909090" text-anchor="middle" letter-spacing="-0.5">-10</text>
<rect x="1089.8" y="1301.7" width="31.8" height="1.2" fill="#9a9a9a"/>
<text x="1076.0" y="1306.2" font-size="15" fill="#909090" text-anchor="middle" letter-spacing="-0.5">-20</text>
<rect x="1089.8" y="1371.8" width="31.8" height="1.2" fill="#9a9a9a"/>
<text x="1076.0" y="1376.3" font-size="15" fill="#909090" text-anchor="middle" letter-spacing="-0.5">-30</text>
<rect x="1089.8" y="1442.8" width="31.8" height="1.2" fill="#9a9a9a"/>
<text x="1076.0" y="1447.3" font-size="15" fill="#909090" text-anchor="middle" letter-spacing="-0.5">-50</text>
<rect x="1120.7" y="1482.0" width="10" height="61.4" fill="#000" opacity="0.22" filter="url(#blur)"/>
<rect x="1085.9" y="1472.0" width="38.8" height="81.4" fill="url(#fcap)" rx="3"/>
<text x="1103.7" y="1570.0" font-size="26.8" fill="#f0f0f0" text-anchor="middle" letter-spacing="-1.0">Bus 13</text>
<path d="M1177.60,393.30 H1266.90 L1270.50,396.90 V524.00 L1266.90,527.60 H1177.60 L1174.00,524.00 V396.90 Z" fill="#581818"/>
<text x="1222.2" y="455.0" font-size="26.8" fill="#f0f0f0" text-anchor="middle" letter-spacing="-0.8">Bus 14</text>
<text x="1222.2" y="485.0" font-size="26.8" fill="#f0f0f0" text-anchor="middle" letter-spacing="-0.8">Mom</text>
<path d="M1177.60,543.00 H1266.90 L1270.50,546.60 V673.50 L1266.90,677.10 H1177.60 L1174.00,673.50 V546.60 Z" fill="#581818"/>
<text x="1222.2" y="604.6" font-size="26.8" fill="#f0f0f0" text-anchor="middle" letter-spacing="-0.8">Bus 14</text>
<text x="1222.2" y="634.6" font-size="26.8" fill="#f0f0f0" text-anchor="middle" letter-spacing="-0.8">Off</text>
<rect x="1174.0" y="692.0" width="96.5" height="89.0" fill="#dcdcdc"/>
<text x="1222.2" y="747.1" font-size="26.8" fill="#050505" text-anchor="middle" letter-spacing="-0.8">Bus 14</text>
<rect x="1174.0" y="781.0" width="96.5" height="39.0" fill="#28292e"/>
<rect x="1175.0" y="782.0" width="94.5" height="37.0" fill="none" stroke="#5d5354" stroke-width="2"/>
<rect x="1222.5" y="782.0" width="2" height="37.0" fill="#f0f0f0"/>
<rect x="1174.0" y="820.0" width="96.5" height="67.7" fill="#581818"/>
<text x="1222.2" y="864.4" font-size="26.8" fill="#f0f0f0" text-anchor="middle" letter-spacing="-0.6">MUTE</text>
<rect x="1174.0" y="887.7" width="96.5" height="685.9" fill="#28292e"/>
<rect x="1199.8" y="899.8" width="6.3" height="2.2" fill="#f0f0f0"/>
<ellipse cx="1213.8" cy="901.9" rx="5.0" ry="5.8" fill="none" stroke="#f0f0f0" stroke-width="2.3"/>
<ellipse cx="1225.4" cy="901.9" rx="5.0" ry="5.8" fill="none" stroke="#f0f0f0" stroke-width="2.3"/>
<rect x="1257.3" y="887.7" width="4.0" height="20.3" fill="#6a1818"/>
<rect x="1257.3" y="908.0" width="4.0" height="196.0" fill="#73441a"/>
<rect x="1257.3" y="1104.0" width="4.0" height="451.0" fill="#2a3a1a"/>
<rect x="1267.0" y="1099.0" width="4.0" height="146.0" fill="#ff2424"/>
<rect x="1213.6" y="949.5" width="8.6" height="522.5" fill="#000000"/>
<rect x="1201.8" y="948.9" width="31.8" height="1.2" fill="#9a9a9a"/>
<text x="1188.0" y="953.4" font-size="15" fill="#909090" text-anchor="middle" letter-spacing="-0.5">10</text>
<rect x="1201.8" y="1019.9" width="31.8" height="1.2" fill="#9a9a9a"/>
<text x="1188.0" y="1024.4" font-size="15" fill="#909090" text-anchor="middle" letter-spacing="-0.5">5</text>
<rect x="1201.8" y="1089.8" width="31.8" height="1.2" fill="#e6e6e6"/>
<text x="1188.0" y="1094.3" font-size="15" fill="#909090" text-anchor="middle" letter-spacing="-0.5">0</text>
<rect x="1201.8" y="1160.8" width="31.8" height="1.2" fill="#9a9a9a"/>
<text x="1188.0" y="1165.3" font-size="15" fill="#909090" text-anchor="middle" letter-spacing="-0.5">-5</text>
<rect x="1201.8" y="1230.7" width="31.8" height="1.2" fill="#9a9a9a"/>
<text x="1188.0" y="1235.2" font-size="15" fill="#909090" text-anchor="middle" letter-spacing="-0.5">-10</text>
<rect x="1201.8" y="1301.7" width="31.8" height="1.2" fill="#9a9a9a"/>
<text x="1188.0" y="1306.2" font-size="15" fill="#909090" text-anchor="middle" letter-spacing="-0.5">-20</text>
<rect x="1201.8" y="1371.8" width="31.8" height="1.2" fill="#9a9a9a"/>
<text x="1188.0" y="1376.3" font-size="15" fill="#909090" text-anchor="middle" letter-spacing="-0.5">-30</text>
<rect x="1201.8" y="1442.8" width="31.8" height="1.2" fill="#9a9a9a"/>
<text x="1188.0" y="1447.3" font-size="15" fill="#909090" text-anchor="middle" letter-spacing="-0.5">-50</text>
<rect x="1232.7" y="1482.0" width="10" height="61.4" fill="#000" opacity="0.22" filter="url(#blur)"/>
<rect x="1197.9" y="1472.0" width="38.8" height="81.4" fill="url(#fcap)" rx="3"/>
<text x="1215.7" y="1570.0" font-size="26.8" fill="#f0f0f0" text-anchor="middle" letter-spacing="-1.0">Bus 14</text>
<path d="M1288.90,393.30 H1378.20 L1381.80,396.90 V524.00 L1378.20,527.60 H1288.90 L1285.30,524.00 V396.90 Z" fill="#581818"/>
<text x="1333.5" y="455.0" font-size="26.8" fill="#f0f0f0" text-anchor="middle" letter-spacing="-0.8">Bus 15</text>
<text x="1333.5" y="485.0" font-size="26.8" fill="#f0f0f0" text-anchor="middle" letter-spacing="-0.8">Mom</text>
<path d="M1288.90,543.00 H1378.20 L1381.80,546.60 V673.50 L1378.20,677.10 H1288.90 L1285.30,673.50 V546.60 Z" fill="#581818"/>
<text x="1333.5" y="604.6" font-size="26.8" fill="#f0f0f0" text-anchor="middle" letter-spacing="-0.8">Bus 15</text>
<text x="1333.5" y="634.6" font-size="26.8" fill="#f0f0f0" text-anchor="middle" letter-spacing="-0.8">Off</text>
<rect x="1285.3" y="692.0" width="96.5" height="89.0" fill="#dcdcdc"/>
<text x="1333.5" y="747.1" font-size="26.8" fill="#050505" text-anchor="middle" letter-spacing="-0.8">Bus 15</text>
<rect x="1285.3" y="781.0" width="96.5" height="39.0" fill="#28292e"/>
<rect x="1286.3" y="782.0" width="94.5" height="37.0" fill="none" stroke="#5d5354" stroke-width="2"/>
<rect x="1333.8" y="782.0" width="2" height="37.0" fill="#f0f0f0"/>
<rect x="1285.3" y="820.0" width="96.5" height="67.7" fill="#581818"/>
<text x="1333.5" y="864.4" font-size="26.8" fill="#f0f0f0" text-anchor="middle" letter-spacing="-0.6">MUTE</text>
<rect x="1285.3" y="887.7" width="96.5" height="685.9" fill="#28292e"/>
<rect x="1311.0" y="899.8" width="6.3" height="2.2" fill="#f0f0f0"/>
<ellipse cx="1325.1" cy="901.9" rx="5.0" ry="5.8" fill="none" stroke="#f0f0f0" stroke-width="2.3"/>
<ellipse cx="1336.7" cy="901.9" rx="5.0" ry="5.8" fill="none" stroke="#f0f0f0" stroke-width="2.3"/>
<rect x="1368.6" y="887.7" width="4.0" height="20.3" fill="#6a1818"/>
<rect x="1368.6" y="908.0" width="4.0" height="196.0" fill="#73441a"/>
<rect x="1368.6" y="1104.0" width="4.0" height="451.0" fill="#2a3a1a"/>
<rect x="1378.3" y="1099.0" width="4.0" height="146.0" fill="#ff2424"/>
<rect x="1324.9" y="949.5" width="8.6" height="522.5" fill="#000000"/>
<rect x="1313.1" y="948.9" width="31.8" height="1.2" fill="#9a9a9a"/>
<text x="1299.3" y="953.4" font-size="15" fill="#909090" text-anchor="middle" letter-spacing="-0.5">10</text>
<rect x="1313.1" y="1019.9" width="31.8" height="1.2" fill="#9a9a9a"/>
<text x="1299.3" y="1024.4" font-size="15" fill="#909090" text-anchor="middle" letter-spacing="-0.5">5</text>
<rect x="1313.1" y="1089.8" width="31.8" height="1.2" fill="#e6e6e6"/>
<text x="1299.3" y="1094.3" font-size="15" fill="#909090" text-anchor="middle" letter-spacing="-0.5">0</text>
<rect x="1313.1" y="1160.8" width="31.8" height="1.2" fill="#9a9a9a"/>
<text x="1299.3" y="1165.3" font-size="15" fill="#909090" text-anchor="middle" letter-spacing="-0.5">-5</text>
<rect x="1313.1" y="1230.7" width="31.8" height="1.2" fill="#9a9a9a"/>
<text x="1299.3" y="1235.2" font-size="15" fill="#909090" text-anchor="middle" letter-spacing="-0.5">-10</text>
<rect x="1313.1" y="1301.7" width="31.8" height="1.2" fill="#9a9a9a"/>
<text x="1299.3" y="1306.2" font-size="15" fill="#909090" text-anchor="middle" letter-spacing="-0.5">-20</text>
<rect x="1313.1" y="1371.8" width="31.8" height="1.2" fill="#9a9a9a"/>
<text x="1299.3" y="1376.3" font-size="15" fill="#909090" text-anchor="middle" letter-spacing="-0.5">-30</text>
<rect x="1313.1" y="1442.8" width="31.8" height="1.2" fill="#9a9a9a"/>
<text x="1299.3" y="1447.3" font-size="15" fill="#909090" text-anchor="middle" letter-spacing="-0.5">-50</text>
<rect x="1344.0" y="1482.0" width="10" height="61.4" fill="#000" opacity="0.22" filter="url(#blur)"/>
<rect x="1309.2" y="1472.0" width="38.8" height="81.4" fill="url(#fcap)" rx="3"/>
<text x="1326.9" y="1570.0" font-size="26.8" fill="#f0f0f0" text-anchor="middle" letter-spacing="-1.0">Bus 15</text>
<path d="M1400.60,393.30 H1489.90 L1493.50,396.90 V524.00 L1489.90,527.60 H1400.60 L1397.00,524.00 V396.90 Z" fill="#581818"/>
<text x="1445.2" y="455.0" font-size="26.8" fill="#f0f0f0" text-anchor="middle" letter-spacing="-0.8">Bus 16</text>
<text x="1445.2" y="485.0" font-size="26.8" fill="#f0f0f0" text-anchor="middle" letter-spacing="-0.8">Mom</text>
<path d="M1400.60,543.00 H1489.90 L1493.50,546.60 V673.50 L1489.90,677.10 H1400.60 L1397.00,673.50 V546.60 Z" fill="#581818"/>
<text x="1445.2" y="604.6" font-size="26.8" fill="#f0f0f0" text-anchor="middle" letter-spacing="-0.8">Bus 16</text>
<text x="1445.2" y="634.6" font-size="26.8" fill="#f0f0f0" text-anchor="middle" letter-spacing="-0.8">Off</text>
<rect x="1397.0" y="692.0" width="96.5" height="89.0" fill="#dcdcdc"/>
<text x="1445.2" y="747.1" font-size="26.8" fill="#050505" text-anchor="middle" letter-spacing="-0.8">Bus 16</text>
<rect x="1397.0" y="781.0" width="96.5" height="39.0" fill="#28292e"/>
<rect x="1398.0" y="782.0" width="94.5" height="37.0" fill="none" stroke="#5d5354" stroke-width="2"/>
<rect x="1445.5" y="782.0" width="2" height="37.0" fill="#f0f0f0"/>
<rect x="1397.0" y="820.0" width="96.5" height="67.7" fill="#581818"/>
<text x="1445.2" y="864.4" font-size="26.8" fill="#f0f0f0" text-anchor="middle" letter-spacing="-0.6">MUTE</text>
<rect x="1397.0" y="887.7" width="96.5" height="685.9" fill="#28292e"/>
<rect x="1422.8" y="899.8" width="6.3" height="2.2" fill="#f0f0f0"/>
<ellipse cx="1436.8" cy="901.9" rx="5.0" ry="5.8" fill="none" stroke="#f0f0f0" stroke-width="2.3"/>
<ellipse cx="1448.4" cy="901.9" rx="5.0" ry="5.8" fill="none" stroke="#f0f0f0" stroke-width="2.3"/>
<rect x="1480.3" y="887.7" width="4.0" height="20.3" fill="#6a1818"/>
<rect x="1480.3" y="908.0" width="4.0" height="196.0" fill="#73441a"/>
<rect x="1480.3" y="1104.0" width="4.0" height="451.0" fill="#2a3a1a"/>
<rect x="1490.0" y="1099.0" width="4.0" height="146.0" fill="#ff2424"/>
<rect x="1436.6" y="949.5" width="8.6" height="522.5" fill="#000000"/>
<rect x="1424.8" y="948.9" width="31.8" height="1.2" fill="#9a9a9a"/>
<text x="1411.0" y="953.4" font-size="15" fill="#909090" text-anchor="middle" letter-spacing="-0.5">10</text>
<rect x="1424.8" y="1019.9" width="31.8" height="1.2" fill="#9a9a9a"/>
<text x="1411.0" y="1024.4" font-size="15" fill="#909090" text-anchor="middle" letter-spacing="-0.5">5</text>
<rect x="1424.8" y="1089.8" width="31.8" height="1.2" fill="#e6e6e6"/>
<text x="1411.0" y="1094.3" font-size="15" fill="#909090" text-anchor="middle" letter-spacing="-0.5">0</text>
<rect x="1424.8" y="1160.8" width="31.8" height="1.2" fill="#9a9a9a"/>
<text x="1411.0" y="1165.3" font-size="15" fill="#909090" text-anchor="middle" letter-spacing="-0.5">-5</text>
<rect x="1424.8" y="1230.7" width="31.8" height="1.2" fill="#9a9a9a"/>
<text x="1411.0" y="1235.2" font-size="15" fill="#909090" text-anchor="middle" letter-spacing="-0.5">-10</text>
<rect x="1424.8" y="1301.7" width="31.8" height="1.2" fill="#9a9a9a"/>
<text x="1411.0" y="1306.2" font-size="15" fill="#909090" text-anchor="middle" letter-spacing="-0.5">-20</text>
<rect x="1424.8" y="1371.8" width="31.8" height="1.2" fill="#9a9a9a"/>
<text x="1411.0" y="1376.3" font-size="15" fill="#909090" text-anchor="middle" letter-spacing="-0.5">-30</text>
<rect x="1424.8" y="1442.8" width="31.8" height="1.2" fill="#9a9a9a"/>
<text x="1411.0" y="1447.3" font-size="15" fill="#909090" text-anchor="middle" letter-spacing="-0.5">-50</text>
<rect x="1455.7" y="1482.0" width="10" height="61.4" fill="#000" opacity="0.22" filter="url(#blur)"/>
<rect x="1420.9" y="1472.0" width="38.8" height="81.4" fill="url(#fcap)" rx="3"/>
<text x="1438.7" y="1570.0" font-size="26.8" fill="#f0f0f0" text-anchor="middle" letter-spacing="-1.0">Bus 16</text>
<rect x="1564.0" y="94.0" width="97.0" height="88.8" fill="#dcdcdc"/>
<text x="1612.5" y="149.0" font-size="26.8" fill="#050505" text-anchor="middle" letter-spacing="-0.8">DCA 1</text>
<rect x="1564.0" y="182.8" width="97.0" height="40.2" fill="#28292e"/>
<rect x="1564.0" y="223.0" width="97.0" height="66.7" fill="#581818"/>
<text x="1612.5" y="266.9" font-size="26.8" fill="#f0f0f0" text-anchor="middle" letter-spacing="-0.6">MUTE</text>
<rect x="1564.0" y="289.7" width="97.0" height="686.2" fill="#28292e"/>
<rect x="1589.1" y="301.6" width="6.3" height="2.2" fill="#f0f0f0"/>
<ellipse cx="1603.2" cy="303.7" rx="5.0" ry="5.8" fill="none" stroke="#f0f0f0" stroke-width="2.3"/>
<ellipse cx="1614.8" cy="303.7" rx="5.0" ry="5.8" fill="none" stroke="#f0f0f0" stroke-width="2.3"/>
<rect x="1646.0" y="289.7" width="5.0" height="20.0" fill="#6a1818"/>
<rect x="1646.0" y="309.7" width="5.0" height="196.3" fill="#73441a"/>
<rect x="1646.0" y="506.0" width="5.0" height="450.5" fill="#2a3a1a"/>
<rect x="1604.0" y="351.5" width="8.0" height="522.5" fill="#000000"/>
<rect x="1591.0" y="350.9" width="33.0" height="1.2" fill="#9a9a9a"/>
<text x="1578.0" y="355.4" font-size="15" fill="#909090" text-anchor="middle" letter-spacing="-0.5">10</text>
<rect x="1591.0" y="421.4" width="33.0" height="1.2" fill="#9a9a9a"/>
<text x="1578.0" y="425.9" font-size="15" fill="#909090" text-anchor="middle" letter-spacing="-0.5">5</text>
<rect x="1591.0" y="491.9" width="33.0" height="1.2" fill="#e6e6e6"/>
<text x="1578.0" y="496.4" font-size="15" fill="#909090" text-anchor="middle" letter-spacing="-0.5">0</text>
<rect x="1591.0" y="562.4" width="33.0" height="1.2" fill="#9a9a9a"/>
<text x="1578.0" y="566.9" font-size="15" fill="#909090" text-anchor="middle" letter-spacing="-0.5">-5</text>
<rect x="1591.0" y="633.0" width="33.0" height="1.2" fill="#9a9a9a"/>
<text x="1578.0" y="637.5" font-size="15" fill="#909090" text-anchor="middle" letter-spacing="-0.5">-10</text>
<rect x="1591.0" y="703.5" width="33.0" height="1.2" fill="#9a9a9a"/>
<text x="1578.0" y="708.0" font-size="15" fill="#909090" text-anchor="middle" letter-spacing="-0.5">-20</text>
<rect x="1591.0" y="774.0" width="33.0" height="1.2" fill="#9a9a9a"/>
<text x="1578.0" y="778.5" font-size="15" fill="#909090" text-anchor="middle" letter-spacing="-0.5">-30</text>
<rect x="1591.0" y="844.5" width="33.0" height="1.2" fill="#9a9a9a"/>
<text x="1578.0" y="849.0" font-size="15" fill="#909090" text-anchor="middle" letter-spacing="-0.5">-50</text>
<rect x="1622.4" y="884.0" width="10" height="61.4" fill="#000" opacity="0.22" filter="url(#blur)"/>
<rect x="1588.0" y="874.0" width="38.4" height="81.4" fill="url(#fcap)" rx="3"/>
<text x="1605.0" y="971.6" font-size="26.8" fill="#f0f0f0" text-anchor="middle" letter-spacing="-1.0">DCA 1</text>
<rect x="1676.0" y="94.0" width="97.0" height="88.8" fill="#dcdcdc"/>
<text x="1724.5" y="149.0" font-size="26.8" fill="#050505" text-anchor="middle" letter-spacing="-0.8">DCA 6</text>
<rect x="1676.0" y="182.8" width="97.0" height="40.2" fill="#28292e"/>
<rect x="1676.0" y="223.0" width="97.0" height="66.7" fill="#581818"/>
<text x="1724.5" y="266.9" font-size="26.8" fill="#f0f0f0" text-anchor="middle" letter-spacing="-0.6">MUTE</text>
<rect x="1676.0" y="289.7" width="97.0" height="686.2" fill="#28292e"/>
<rect x="1701.1" y="301.6" width="6.3" height="2.2" fill="#f0f0f0"/>
<ellipse cx="1715.2" cy="303.7" rx="5.0" ry="5.8" fill="none" stroke="#f0f0f0" stroke-width="2.3"/>
<ellipse cx="1726.8" cy="303.7" rx="5.0" ry="5.8" fill="none" stroke="#f0f0f0" stroke-width="2.3"/>
<rect x="1758.0" y="289.7" width="5.0" height="20.0" fill="#6a1818"/>
<rect x="1758.0" y="309.7" width="5.0" height="196.3" fill="#73441a"/>
<rect x="1758.0" y="506.0" width="5.0" height="450.5" fill="#2a3a1a"/>
<rect x="1716.0" y="351.5" width="8.0" height="522.5" fill="#000000"/>
<rect x="1703.0" y="350.9" width="33.0" height="1.2" fill="#9a9a9a"/>
<text x="1690.0" y="355.4" font-size="15" fill="#909090" text-anchor="middle" letter-spacing="-0.5">10</text>
<rect x="1703.0" y="421.4" width="33.0" height="1.2" fill="#9a9a9a"/>
<text x="1690.0" y="425.9" font-size="15" fill="#909090" text-anchor="middle" letter-spacing="-0.5">5</text>
<rect x="1703.0" y="491.9" width="33.0" height="1.2" fill="#e6e6e6"/>
<text x="1690.0" y="496.4" font-size="15" fill="#909090" text-anchor="middle" letter-spacing="-0.5">0</text>
<rect x="1703.0" y="562.4" width="33.0" height="1.2" fill="#9a9a9a"/>
<text x="1690.0" y="566.9" font-size="15" fill="#909090" text-anchor="middle" letter-spacing="-0.5">-5</text>
<rect x="1703.0" y="633.0" width="33.0" height="1.2" fill="#9a9a9a"/>
<text x="1690.0" y="637.5" font-size="15" fill="#909090" text-anchor="middle" letter-spacing="-0.5">-10</text>
<rect x="1703.0" y="703.5" width="33.0" height="1.2" fill="#9a9a9a"/>
<text x="1690.0" y="708.0" font-size="15" fill="#909090" text-anchor="middle" letter-spacing="-0.5">-20</text>
<rect x="1703.0" y="774.0" width="33.0" height="1.2" fill="#9a9a9a"/>
<text x="1690.0" y="778.5" font-size="15" fill="#909090" text-anchor="middle" letter-spacing="-0.5">-30</text>
<rect x="1703.0" y="844.5" width="33.0" height="1.2" fill="#9a9a9a"/>
<text x="1690.0" y="849.0" font-size="15" fill="#909090" text-anchor="middle" letter-spacing="-0.5">-50</text>
<rect x="1734.4" y="884.0" width="10" height="61.4" fill="#000" opacity="0.22" filter="url(#blur)"/>
<rect x="1700.0" y="874.0" width="38.4" height="81.4" fill="url(#fcap)" rx="3"/>
<text x="1717.0" y="971.6" font-size="26.8" fill="#f0f0f0" text-anchor="middle" letter-spacing="-1.0">DCA 6</text>
<rect x="1787.0" y="94.0" width="97.0" height="88.8" fill="#dcdcdc"/>
<text x="1835.5" y="149.0" font-size="26.8" fill="#050505" text-anchor="middle" letter-spacing="-0.8">DCA 7</text>
<rect x="1787.0" y="182.8" width="97.0" height="40.2" fill="#28292e"/>
<rect x="1787.0" y="223.0" width="97.0" height="66.7" fill="#581818"/>
<text x="1835.5" y="266.9" font-size="26.8" fill="#f0f0f0" text-anchor="middle" letter-spacing="-0.6">MUTE</text>
<rect x="1787.0" y="289.7" width="97.0" height="686.2" fill="#28292e"/>
<rect x="1812.1" y="301.6" width="6.3" height="2.2" fill="#f0f0f0"/>
<ellipse cx="1826.2" cy="303.7" rx="5.0" ry="5.8" fill="none" stroke="#f0f0f0" stroke-width="2.3"/>
<ellipse cx="1837.8" cy="303.7" rx="5.0" ry="5.8" fill="none" stroke="#f0f0f0" stroke-width="2.3"/>
<rect x="1869.0" y="289.7" width="5.0" height="20.0" fill="#6a1818"/>
<rect x="1869.0" y="309.7" width="5.0" height="196.3" fill="#73441a"/>
<rect x="1869.0" y="506.0" width="5.0" height="450.5" fill="#2a3a1a"/>
<rect x="1827.0" y="351.5" width="8.0" height="522.5" fill="#000000"/>
<rect x="1814.0" y="350.9" width="33.0" height="1.2" fill="#9a9a9a"/>
<text x="1801.0" y="355.4" font-size="15" fill="#909090" text-anchor="middle" letter-spacing="-0.5">10</text>
<rect x="1814.0" y="421.4" width="33.0" height="1.2" fill="#9a9a9a"/>
<text x="1801.0" y="425.9" font-size="15" fill="#909090" text-anchor="middle" letter-spacing="-0.5">5</text>
<rect x="1814.0" y="491.9" width="33.0" height="1.2" fill="#e6e6e6"/>
<text x="1801.0" y="496.4" font-size="15" fill="#909090" text-anchor="middle" letter-spacing="-0.5">0</text>
<rect x="1814.0" y="562.4" width="33.0" height="1.2" fill="#9a9a9a"/>
<text x="1801.0" y="566.9" font-size="15" fill="#909090" text-anchor="middle" letter-spacing="-0.5">-5</text>
<rect x="1814.0" y="633.0" width="33.0" height="1.2" fill="#9a9a9a"/>
<text x="1801.0" y="637.5" font-size="15" fill="#909090" text-anchor="middle" letter-spacing="-0.5">-10</text>
<rect x="1814.0" y="703.5" width="33.0" height="1.2" fill="#9a9a9a"/>
<text x="1801.0" y="708.0" font-size="15" fill="#909090" text-anchor="middle" letter-spacing="-0.5">-20</text>
<rect x="1814.0" y="774.0" width="33.0" height="1.2" fill="#9a9a9a"/>
<text x="1801.0" y="778.5" font-size="15" fill="#909090" text-anchor="middle" letter-spacing="-0.5">-30</text>
<rect x="1814.0" y="844.5" width="33.0" height="1.2" fill="#9a9a9a"/>
<text x="1801.0" y="849.0" font-size="15" fill="#909090" text-anchor="middle" letter-spacing="-0.5">-50</text>
<rect x="1845.4" y="884.0" width="10" height="61.4" fill="#000" opacity="0.22" filter="url(#blur)"/>
<rect x="1811.0" y="874.0" width="38.4" height="81.4" fill="url(#fcap)" rx="3"/>
<text x="1828.0" y="971.6" font-size="26.8" fill="#f0f0f0" text-anchor="middle" letter-spacing="-1.0">DCA 7</text>
<rect x="1899.0" y="94.0" width="97.0" height="88.8" fill="#dcdcdc"/>
<text x="1947.5" y="149.0" font-size="26.8" fill="#050505" text-anchor="middle" letter-spacing="-0.8">DCA 8</text>
<rect x="1899.0" y="182.8" width="97.0" height="40.2" fill="#28292e"/>
<rect x="1899.0" y="223.0" width="97.0" height="66.7" fill="#581818"/>
<text x="1947.5" y="266.9" font-size="26.8" fill="#f0f0f0" text-anchor="middle" letter-spacing="-0.6">MUTE</text>
<rect x="1899.0" y="289.7" width="97.0" height="686.2" fill="#28292e"/>
<rect x="1924.1" y="301.6" width="6.3" height="2.2" fill="#f0f0f0"/>
<ellipse cx="1938.2" cy="303.7" rx="5.0" ry="5.8" fill="none" stroke="#f0f0f0" stroke-width="2.3"/>
<ellipse cx="1949.8" cy="303.7" rx="5.0" ry="5.8" fill="none" stroke="#f0f0f0" stroke-width="2.3"/>
<rect x="1981.0" y="289.7" width="5.0" height="20.0" fill="#6a1818"/>
<rect x="1981.0" y="309.7" width="5.0" height="196.3" fill="#73441a"/>
<rect x="1981.0" y="506.0" width="5.0" height="450.5" fill="#2a3a1a"/>
<rect x="1939.0" y="351.5" width="8.0" height="522.5" fill="#000000"/>
<rect x="1926.0" y="350.9" width="33.0" height="1.2" fill="#9a9a9a"/>
<text x="1913.0" y="355.4" font-size="15" fill="#909090" text-anchor="middle" letter-spacing="-0.5">10</text>
<rect x="1926.0" y="421.4" width="33.0" height="1.2" fill="#9a9a9a"/>
<text x="1913.0" y="425.9" font-size="15" fill="#909090" text-anchor="middle" letter-spacing="-0.5">5</text>
<rect x="1926.0" y="491.9" width="33.0" height="1.2" fill="#e6e6e6"/>
<text x="1913.0" y="496.4" font-size="15" fill="#909090" text-anchor="middle" letter-spacing="-0.5">0</text>
<rect x="1926.0" y="562.4" width="33.0" height="1.2" fill="#9a9a9a"/>
<text x="1913.0" y="566.9" font-size="15" fill="#909090" text-anchor="middle" letter-spacing="-0.5">-5</text>
<rect x="1926.0" y="633.0" width="33.0" height="1.2" fill="#9a9a9a"/>
<text x="1913.0" y="637.5" font-size="15" fill="#909090" text-anchor="middle" letter-spacing="-0.5">-10</text>
<rect x="1926.0" y="703.5" width="33.0" height="1.2" fill="#9a9a9a"/>
<text x="1913.0" y="708.0" font-size="15" fill="#909090" text-anchor="middle" letter-spacing="-0.5">-20</text>
<rect x="1926.0" y="774.0" width="33.0" height="1.2" fill="#9a9a9a"/>
<text x="1913.0" y="778.5" font-size="15" fill="#909090" text-anchor="middle" letter-spacing="-0.5">-30</text>
<rect x="1926.0" y="844.5" width="33.0" height="1.2" fill="#9a9a9a"/>
<text x="1913.0" y="849.0" font-size="15" fill="#909090" text-anchor="middle" letter-spacing="-0.5">-50</text>
<rect x="1957.4" y="884.0" width="10" height="61.4" fill="#000" opacity="0.22" filter="url(#blur)"/>
<rect x="1923.0" y="874.0" width="38.4" height="81.4" fill="url(#fcap)" rx="3"/>
<text x="1940.0" y="971.6" font-size="26.8" fill="#f0f0f0" text-anchor="middle" letter-spacing="-1.0">DCA 8</text>
<rect x="2066.0" y="94.0" width="97.0" height="88.8" fill="#dcdcdc"/>
<text x="2114.5" y="149.0" font-size="26.8" fill="#050505" text-anchor="middle" letter-spacing="-0.8">DCA 4</text>
<rect x="2066.0" y="182.8" width="97.0" height="40.2" fill="#28292e"/>
<rect x="2066.0" y="223.0" width="97.0" height="66.7" fill="#581818"/>
<text x="2114.5" y="266.9" font-size="26.8" fill="#f0f0f0" text-anchor="middle" letter-spacing="-0.6">MUTE</text>
<rect x="2066.0" y="289.7" width="97.0" height="686.2" fill="#28292e"/>
<rect x="2091.1" y="301.6" width="6.3" height="2.2" fill="#f0f0f0"/>
<ellipse cx="2105.2" cy="303.7" rx="5.0" ry="5.8" fill="none" stroke="#f0f0f0" stroke-width="2.3"/>
<ellipse cx="2116.8" cy="303.7" rx="5.0" ry="5.8" fill="none" stroke="#f0f0f0" stroke-width="2.3"/>
<rect x="2148.0" y="289.7" width="5.0" height="20.0" fill="#6a1818"/>
<rect x="2148.0" y="309.7" width="5.0" height="196.3" fill="#73441a"/>
<rect x="2148.0" y="506.0" width="5.0" height="450.5" fill="#2a3a1a"/>
<rect x="2106.0" y="351.5" width="8.0" height="522.5" fill="#000000"/>
<rect x="2093.0" y="350.9" width="33.0" height="1.2" fill="#9a9a9a"/>
<text x="2080.0" y="355.4" font-size="15" fill="#909090" text-anchor="middle" letter-spacing="-0.5">10</text>
<rect x="2093.0" y="421.4" width="33.0" height="1.2" fill="#9a9a9a"/>
<text x="2080.0" y="425.9" font-size="15" fill="#909090" text-anchor="middle" letter-spacing="-0.5">5</text>
<rect x="2093.0" y="491.9" width="33.0" height="1.2" fill="#e6e6e6"/>
<text x="2080.0" y="496.4" font-size="15" fill="#909090" text-anchor="middle" letter-spacing="-0.5">0</text>
<rect x="2093.0" y="562.4" width="33.0" height="1.2" fill="#9a9a9a"/>
<text x="2080.0" y="566.9" font-size="15" fill="#909090" text-anchor="middle" letter-spacing="-0.5">-5</text>
<rect x="2093.0" y="633.0" width="33.0" height="1.2" fill="#9a9a9a"/>
<text x="2080.0" y="637.5" font-size="15" fill="#909090" text-anchor="middle" letter-spacing="-0.5">-10</text>
<rect x="2093.0" y="703.5" width="33.0" height="1.2" fill="#9a9a9a"/>
<text x="2080.0" y="708.0" font-size="15" fill="#909090" text-anchor="middle" letter-spacing="-0.5">-20</text>
<rect x="2093.0" y="774.0" width="33.0" height="1.2" fill="#9a9a9a"/>
<text x="2080.0" y="778.5" font-size="15" fill="#909090" text-anchor="middle" letter-spacing="-0.5">-30</text>
<rect x="2093.0" y="844.5" width="33.0" height="1.2" fill="#9a9a9a"/>
<text x="2080.0" y="849.0" font-size="15" fill="#909090" text-anchor="middle" letter-spacing="-0.5">-50</text>
<rect x="2124.4" y="884.0" width="10" height="61.4" fill="#000" opacity="0.22" filter="url(#blur)"/>
<rect x="2090.0" y="874.0" width="38.4" height="81.4" fill="url(#fcap)" rx="3"/>
<text x="2107.0" y="971.6" font-size="26.8" fill="#f0f0f0" text-anchor="middle" letter-spacing="-1.0">DCA 4</text>
<rect x="2233.3" y="94.0" width="164.7" height="88.4" fill="#dcdcdc"/>
<text x="2315.7" y="148.8" font-size="26.8" fill="#050505" text-anchor="middle" letter-spacing="-0.8">LR</text>
<rect x="2233.3" y="182.4" width="164.7" height="39.6" fill="#28292e"/>
<rect x="2234.3" y="183.4" width="162.7" height="37.6" fill="none" stroke="#5d5354" stroke-width="2"/>
<rect x="2315.8" y="183.4" width="2" height="37.6" fill="#f0f0f0"/>
<rect x="2233.3" y="222.0" width="164.7" height="67.6" fill="#581818"/>
<text x="2315.7" y="266.4" font-size="26.8" fill="#f0f0f0" text-anchor="middle" letter-spacing="-0.6">MUTE</text>
<rect x="2233.3" y="289.6" width="164.7" height="1059.8" fill="#28292e"/>
<rect x="2290.0" y="305.1" width="6.3" height="2.2" fill="#f0f0f0"/>
<ellipse cx="2304.1" cy="307.2" rx="5.0" ry="5.8" fill="none" stroke="#f0f0f0" stroke-width="2.3"/>
<ellipse cx="2315.7" cy="307.2" rx="5.0" ry="5.8" fill="none" stroke="#f0f0f0" stroke-width="2.3"/>
<rect x="2378.6" y="289.6" width="11.2" height="20.4" fill="#6a1818"/>
<rect x="2378.6" y="310.0" width="11.2" height="294.0" fill="#73441a"/>
<rect x="2378.6" y="604.0" width="11.2" height="725.3" fill="#2a3a1a"/>
<rect x="2392.0" y="616.0" width="6.0" height="224.5" fill="#ff2424"/>
<rect x="2302.6" y="387.3" width="14.4" height="794.0" fill="#000000"/>
<rect x="2269.8" y="386.7" width="79.2" height="1.2" fill="#9a9a9a"/>
<text x="2248.0" y="391.2" font-size="15" fill="#909090" text-anchor="middle" letter-spacing="-0.5">10</text>
<rect x="2269.8" y="495.6" width="79.2" height="1.2" fill="#9a9a9a"/>
<text x="2248.0" y="500.1" font-size="15" fill="#909090" text-anchor="middle" letter-spacing="-0.5">5</text>
<rect x="2269.8" y="603.7" width="79.2" height="1.2" fill="#e6e6e6"/>
<text x="2248.0" y="608.2" font-size="15" fill="#909090" text-anchor="middle" letter-spacing="-0.5">0</text>
<rect x="2269.8" y="711.4" width="79.2" height="1.2" fill="#9a9a9a"/>
<text x="2248.0" y="715.9" font-size="15" fill="#909090" text-anchor="middle" letter-spacing="-0.5">-5</text>
<rect x="2269.8" y="819.4" width="79.2" height="1.2" fill="#9a9a9a"/>
<text x="2248.0" y="823.9" font-size="15" fill="#909090" text-anchor="middle" letter-spacing="-0.5">-10</text>
<rect x="2269.8" y="927.6" width="79.2" height="1.2" fill="#9a9a9a"/>
<text x="2248.0" y="932.1" font-size="15" fill="#909090" text-anchor="middle" letter-spacing="-0.5">-20</text>
<rect x="2269.8" y="1036.4" width="79.2" height="1.2" fill="#9a9a9a"/>
<text x="2248.0" y="1040.9" font-size="15" fill="#909090" text-anchor="middle" letter-spacing="-0.5">-30</text>
<rect x="2269.8" y="1144.4" width="79.2" height="1.2" fill="#9a9a9a"/>
<text x="2248.0" y="1148.9" font-size="15" fill="#909090" text-anchor="middle" letter-spacing="-0.5">-50</text>
<rect x="2338.4" y="1191.3" width="10" height="121.5" fill="#000" opacity="0.22" filter="url(#blur)"/>
<rect x="2274.7" y="1181.3" width="67.7" height="141.5" fill="url(#fcap)" rx="3"/>
<text x="2305.9" y="1346.0" font-size="26.8" fill="#f0f0f0" text-anchor="middle" letter-spacing="-1.0">LR</text>
<path d="M2466.00,95.20 H2691.00 L2694.00,98.20 V224.80 L2691.00,227.80 H2466.00 L2463.00,224.80 V98.20 Z" fill="#54545f" stroke="#4e4b5a" stroke-width="2"/>
<text x="2578.5" y="171.1" font-size="26.8" fill="#e4e4e4" text-anchor="middle" letter-spacing="-0.8">Home</text>
<path d="M2466.00,236.00 H2691.00 L2694.00,239.00 V364.80 L2691.00,367.80 H2466.00 L2463.00,364.80 V239.00 Z" fill="#54545f" stroke="#4e4b5a" stroke-width="2"/>
<text x="2578.5" y="311.5" font-size="26.8" fill="#e4e4e4" text-anchor="middle" letter-spacing="-0.8">Chan View</text>
<path d="M2431.90,421.40 H2691.50 L2695.10,425.00 V551.80 L2691.50,555.40 H2431.90 L2428.30,551.80 V425.00 Z" fill="#581818"/>
<text x="2561.7" y="498.0" font-size="26.8" fill="#f0f0f0" text-anchor="middle" letter-spacing="-0.8">Bus 16 Mom</text>
<path d="M2431.90,562.30 H2520.60 L2524.20,565.90 V785.50 L2520.60,789.10 H2431.90 L2428.30,785.50 V565.90 Z" fill="#581818"/>
<text x="2476.2" y="670.3" font-size="26.8" fill="#f0f0f0" text-anchor="middle" letter-spacing="-0.8">Bus 16</text>
<text x="2476.2" y="700.3" font-size="26.8" fill="#f0f0f0" text-anchor="middle" letter-spacing="-0.8">Off</text>
<path d="M2534.30,563.30 H2725.00 L2728.00,566.30 V785.10 L2725.00,788.10 H2534.30 L2531.30,785.10 V566.30 Z" fill="#54545f" stroke="#4e4b5a" stroke-width="2"/>
<text x="2629.7" y="670.3" font-size="26.8" fill="#e4e4e4" text-anchor="middle" letter-spacing="-0.8">Pre Del</text>
<text x="2629.7" y="700.3" font-size="26.8" fill="#e4e4e4" text-anchor="middle" letter-spacing="-0.8">0 ms</text>
<text x="2646.8" y="860.9" font-size="26.3" fill="#f0f0f0" text-anchor="middle" letter-spacing="-1.0">Dly Gain</text>
<path d="M2624.86,931.14 A30.75,30.75 0 1 1 2668.34,931.14" fill="none" stroke="#1b525a" stroke-width="13.5"/>
<line x1="2646.60" y1="909.40" x2="2629.63" y2="926.37" stroke="#45e3f7" stroke-width="5.5"/>
<line x1="2629.63" y1="926.37" x2="2620.08" y2="935.92" stroke="#45e3f7" stroke-width="1.6"/>
<text x="2646.3" y="970.4" font-size="26.3" fill="#f0f0f0" text-anchor="middle" letter-spacing="-1.0">0.20 s</text>
<text x="2509.4" y="996.5" font-size="19.5" fill="#f0f0f0" text-anchor="middle" letter-spacing="-0.6">DrmDecay</text>
<path d="M2488.66,1071.24 A30.75,30.75 0 1 1 2532.14,1071.24" fill="none" stroke="#1b525a" stroke-width="13.5"/>
<line x1="2510.40" y1="1049.50" x2="2493.43" y2="1066.47" stroke="#45e3f7" stroke-width="5.5"/>
<line x1="2493.43" y1="1066.47" x2="2483.88" y2="1076.02" stroke="#45e3f7" stroke-width="1.6"/>
<text x="2509.4" y="1110.5" font-size="26.3" fill="#f0f0f0" text-anchor="middle" letter-spacing="-1.0">0.20 s</text>
<text x="2646.3" y="1047.4" font-size="26.3" fill="#f0f0f0" text-anchor="middle" letter-spacing="-1.0">Dly2Vrb</text>
<path d="M2624.86,1117.74 A30.75,30.75 0 1 1 2668.34,1117.74" fill="none" stroke="#1b525a" stroke-width="13.5"/>
<line x1="2646.60" y1="1096.00" x2="2629.63" y2="1112.97" stroke="#45e3f7" stroke-width="5.5"/>
<line x1="2629.63" y1="1112.97" x2="2620.08" y2="1122.52" stroke="#45e3f7" stroke-width="1.6"/>
<rect x="2629.1" y="1148.9" width="6.3" height="2.2" fill="#f0f0f0"/>
<ellipse cx="2643.2" cy="1151.0" rx="5.0" ry="5.8" fill="none" stroke="#f0f0f0" stroke-width="2.3"/>
<ellipse cx="2654.8" cy="1151.0" rx="5.0" ry="5.8" fill="none" stroke="#f0f0f0" stroke-width="2.3"/>
<text x="2509.4" y="1183.5" font-size="19.5" fill="#f0f0f0" text-anchor="middle" letter-spacing="-0.6">VocDecay</text>
<path d="M2488.66,1258.04 A30.75,30.75 0 1 1 2532.14,1258.04" fill="none" stroke="#1b525a" stroke-width="13.5"/>
<line x1="2510.40" y1="1236.30" x2="2493.43" y2="1253.27" stroke="#45e3f7" stroke-width="5.5"/>
<line x1="2493.43" y1="1253.27" x2="2483.88" y2="1262.82" stroke="#45e3f7" stroke-width="1.6"/>
<text x="2509.4" y="1297.5" font-size="26.3" fill="#f0f0f0" text-anchor="middle" letter-spacing="-1.0">0.20 s</text>
<text x="2645.5" y="1234.6" font-size="26.3" fill="#f0f0f0" text-anchor="middle" letter-spacing="-1.0">F-Back</text>
<path d="M2624.56,1304.44 A30.75,30.75 0 1 1 2668.04,1304.44" fill="none" stroke="#1b525a" stroke-width="13.5"/>
<line x1="2646.30" y1="1282.70" x2="2629.33" y2="1299.67" stroke="#45e3f7" stroke-width="5.5"/>
<line x1="2629.33" y1="1299.67" x2="2619.78" y2="1309.22" stroke="#45e3f7" stroke-width="1.6"/>
<text x="2646.5" y="1343.8" font-size="26.3" fill="#f0f0f0" text-anchor="middle" letter-spacing="-1.0">1.00 Hz</text>
<text x="1845.0" y="1081.8" font-size="26.3" fill="#f0f0f0" text-anchor="middle" letter-spacing="-1.3">CH 01</text>
<text x="1707.0" y="1151.9" font-size="26.3" fill="#f0f0f0" text-anchor="middle" letter-spacing="-1.0">Lo Cut</text>
<path d="M1658.46,1308.74 A69.50,69.50 0 1 1 1756.74,1308.74" fill="none" stroke="#1b525a" stroke-width="14"/>
<line x1="1707.60" y1="1259.60" x2="1663.41" y2="1303.79" stroke="#45e3f7" stroke-width="5"/>
<line x1="1663.41" y1="1303.79" x2="1653.51" y2="1313.69" stroke="#45e3f7" stroke-width="1.6"/>
<text x="1707.0" y="1375.7" font-size="26.3" fill="#f0f0f0" text-anchor="middle" letter-spacing="-1.0">20 Hz</text>
<text x="1946.0" y="1154.8" font-size="26.3" fill="#f0f0f0" text-anchor="middle" letter-spacing="-1.0">HeadAmp</text>
<path d="M1888.29,1341.21 A82.75,82.75 0 1 1 2005.31,1341.21" fill="none" stroke="#1b525a" stroke-width="14"/>
<line x1="1946.80" y1="1282.70" x2="1893.24" y2="1336.26" stroke="#45e3f7" stroke-width="5"/>
<line x1="1893.24" y1="1336.26" x2="1883.34" y2="1346.16" stroke="#45e3f7" stroke-width="1.6"/>
<text x="1946.0" y="1416.7" font-size="26.3" fill="#f0f0f0" text-anchor="middle" letter-spacing="-1.0">-12.0 dB</text>
<path d="M1680.34,1450.50 H1905.56 L1908.50,1453.44 V1625.76 L1905.56,1628.70 H1680.34 L1677.40,1625.76 V1453.44 Z" fill="#2a2a2a" stroke="#20f020" stroke-width="2.2"/>
<text x="1793.0" y="1533.6" font-size="26.8" fill="#f0f0f0" text-anchor="middle" letter-spacing="-0.4">CH Main On (mute)</text>
<text x="1793.0" y="1563.1" font-size="26.8" fill="#f0f0f0" text-anchor="middle" letter-spacing="-0.4">On</text>
<path d="M2022.70,1450.40 H2246.80 L2249.80,1453.40 V1672.00 L2246.80,1675.00 H2022.70 L2019.70,1672.00 V1453.40 Z" fill="#10265a" stroke="#544e5e" stroke-width="2"/>
<text x="2134.8" y="1572.3" font-size="26.8" fill="#f0f0f0" text-anchor="middle" letter-spacing="-0.8">Kill SoF</text>
<path d="M2022.30,1683.60 H2247.20 L2250.80,1687.20 V1906.90 L2247.20,1910.50 H2022.30 L2018.70,1906.90 V1687.20 Z" fill="#6f4a06"/>
<text x="2134.8" y="1806.6" font-size="26.8" fill="#f0f0f0" text-anchor="middle" letter-spacing="-0.8">Clear Solo</text>
<path d="M2295.30,1450.40 H2417.60 L2420.60,1453.40 V1579.00 L2417.60,1582.00 H2295.30 L2292.30,1579.00 V1453.40 Z" fill="#1c5311" stroke="#544e5e" stroke-width="2"/>
<text x="2356.4" y="1510.8" font-size="26.8" fill="#f0f0f0" text-anchor="middle" letter-spacing="-0.8">1</text>
<text x="2356.4" y="1540.8" font-size="26.8" fill="#f0f0f0" text-anchor="middle" letter-spacing="-0.8">Off</text>
<path d="M2432.20,1450.40 H2622.80 L2625.80,1453.40 V1579.00 L2622.80,1582.00 H2432.20 L2429.20,1579.00 V1453.40 Z" fill="#1c5311" stroke="#544e5e" stroke-width="2"/>
<text x="2527.5" y="1510.8" font-size="26.8" fill="#f0f0f0" text-anchor="middle" letter-spacing="-0.8">2</text>
<text x="2527.5" y="1540.8" font-size="26.8" fill="#f0f0f0" text-anchor="middle" letter-spacing="-0.8">Off</text>
<path d="M2295.30,1591.40 H2451.30 L2454.30,1594.40 V1719.20 L2451.30,1722.20 H2295.30 L2292.30,1719.20 V1594.40 Z" fill="#1c5311" stroke="#544e5e" stroke-width="2"/>
<text x="2373.3" y="1651.4" font-size="26.8" fill="#f0f0f0" text-anchor="middle" letter-spacing="-0.8">3</text>
<text x="2373.3" y="1681.4" font-size="26.8" fill="#f0f0f0" text-anchor="middle" letter-spacing="-0.8">Off</text>
<path d="M2466.20,1591.40 H2622.80 L2625.80,1594.40 V1719.20 L2622.80,1722.20 H2466.20 L2463.20,1719.20 V1594.40 Z" fill="#1c5311" stroke="#544e5e" stroke-width="2"/>
<text x="2544.5" y="1651.4" font-size="26.8" fill="#f0f0f0" text-anchor="middle" letter-spacing="-0.8">4</text>
<text x="2544.5" y="1681.4" font-size="26.8" fill="#f0f0f0" text-anchor="middle" letter-spacing="-0.8">Off</text>
<path d="M2295.30,1731.60 H2451.30 L2454.30,1734.60 V1859.40 L2451.30,1862.40 H2295.30 L2292.30,1859.40 V1734.60 Z" fill="#1c5311" stroke="#544e5e" stroke-width="2"/>
<text x="2373.3" y="1791.6" font-size="26.8" fill="#f0f0f0" text-anchor="middle" letter-spacing="-0.8">5</text>
<text x="2373.3" y="1821.6" font-size="26.8" fill="#f0f0f0" text-anchor="middle" letter-spacing="-0.8">Off</text>
<path d="M2466.20,1731.60 H2622.80 L2625.80,1734.60 V1859.40 L2622.80,1862.40 H2466.20 L2463.20,1859.40 V1734.60 Z" fill="#1c5311" stroke="#544e5e" stroke-width="2"/>
<text x="2544.5" y="1791.6" font-size="26.8" fill="#f0f0f0" text-anchor="middle" letter-spacing="-0.8">6</text>
<text x="2544.5" y="1821.6" font-size="26.8" fill="#f0f0f0" text-anchor="middle" letter-spacing="-0.8">Off</text></svg></body></html>
